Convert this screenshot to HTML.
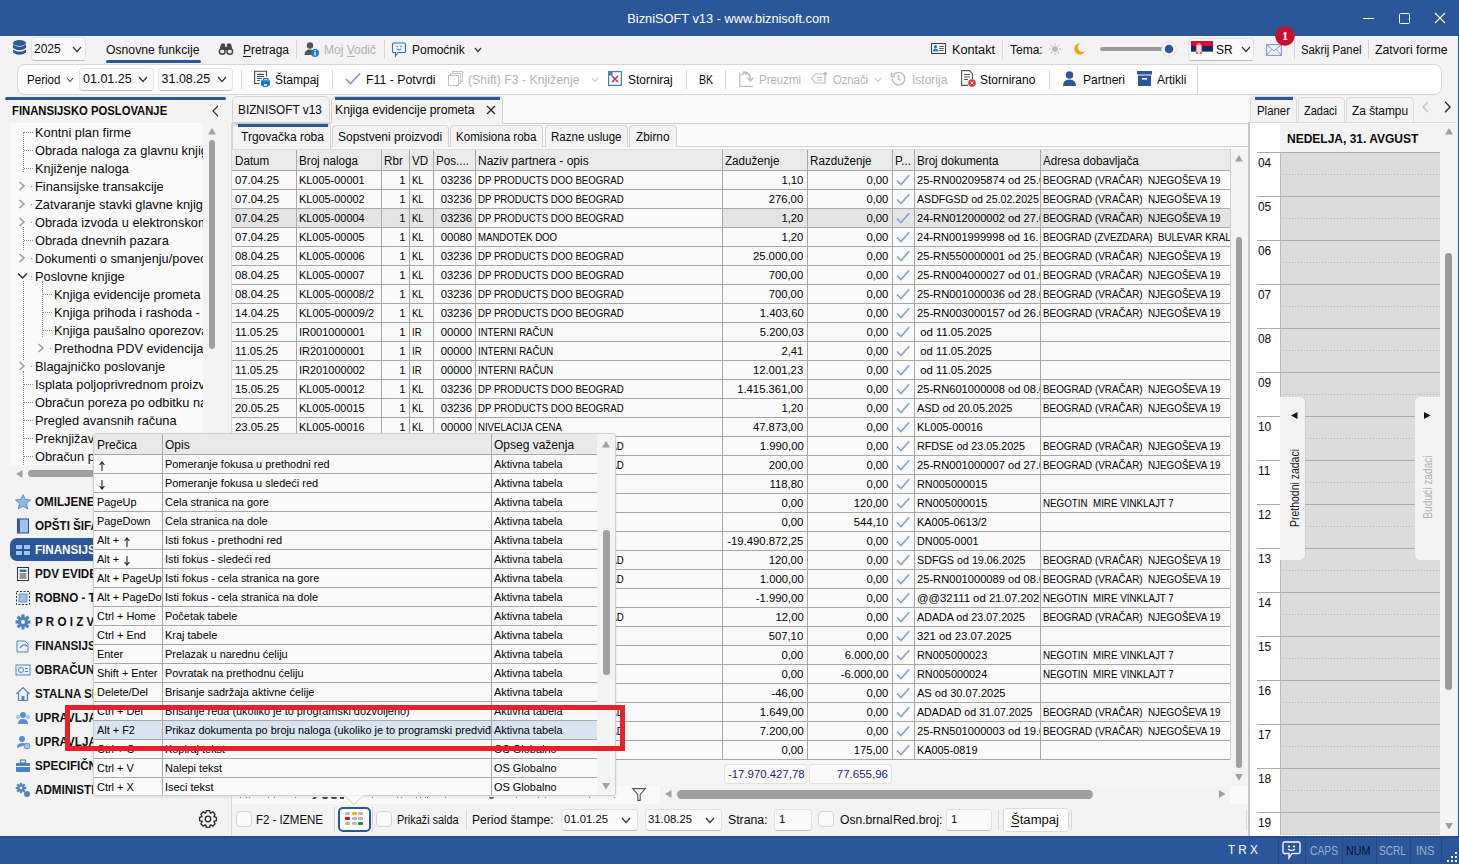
<!DOCTYPE html><html><head><meta charset="utf-8"><style>
html,body{margin:0;padding:0;}
body{width:1459px;height:864px;position:relative;overflow:hidden;background:#F3F3F3;font-family:"Liberation Sans",sans-serif;}
.a{position:absolute;box-sizing:border-box;}
.t{position:absolute;white-space:pre;line-height:1;}
svg.a{overflow:visible}
</style></head><body>
<div class="a" style="left:0px;top:0px;width:1459px;height:36px;background:#2B579A"></div>
<div class="t" style="top:13.16px;font-size:12.8px;color:#FFFFFF;left:627.29px;">BizniSOFT v13 - www.biznisoft.com</div>
<div class="a" style="left:1363px;top:18px;width:11px;height:1px;background:#fff"></div>
<div class="a" style="left:1399px;top:13px;width:10.5px;height:10.5px;border:1px solid #fff;border-radius:1.5px"></div>
<svg class="a" style="left:1434px;top:12px;" width="12" height="12" viewBox="0 0 12 12"><path d="M1 1 L11 11 M11 1 L1 11" stroke="#fff" stroke-width="1.1"/></svg>
<div class="a" style="left:1457.5px;top:36px;width:1.5px;height:800px;background:#2B579A"></div>
<svg class="a" style="left:13px;top:40px;" width="13" height="16" viewBox="0 0 13 16"><ellipse cx="6.5" cy="3" rx="6.5" ry="3" fill="#2B579A"/><path d="M0 4.5 Q6.5 9 13 4.5 V8 Q6.5 12.5 0 8Z" fill="#2B579A"/><path d="M0 9.5 Q6.5 14 13 9.5 V12.5 Q6.5 17 0 12.5Z" fill="#2B579A"/></svg>
<div class="a" style="left:31px;top:37px;width:55px;height:24px;background:#FAFAFA;border:1px solid #E3E3E3;border-bottom:1px solid #BDBDBD;border-radius:4px"></div>
<div class="t" style="top:42.84px;font-size:12px;color:#0A0A0A;left:34px;">2025</div>
<svg class="a" style="left:72px;top:45.75px;" width="10" height="6.5" viewBox="0 0 10 6.5"><path d="M1 1 L5.0 5.5 L9 1" fill="none" stroke="#333" stroke-width="1.2"/></svg>
<div class="t" style="top:43.84px;font-size:12px;color:#0A0A0A;left:106px;transform:scaleX(1.0157);transform-origin:left;">Osnovne funkcije</div>
<div class="a" style="left:106px;top:59.5px;width:95px;height:3px;background:#2B579A;border-radius:2px"></div>
<svg class="a" style="left:219px;top:43px;" width="14" height="12" viewBox="0 0 14 12"><circle cx="3.2" cy="8.5" r="2.8" fill="none" stroke="#444" stroke-width="1.5"/><circle cx="10.8" cy="8.5" r="2.8" fill="none" stroke="#444" stroke-width="1.5"/><path d="M1 7 L2.5 1 H5.5 L6 6 M13 7 L11.5 1 H8.5 L8 6" fill="#444" stroke="#444" stroke-width="1"/><rect x="5.5" y="4" width="3" height="3" fill="#444"/></svg>
<div class="t" style="top:43.84px;font-size:12px;color:#0A0A0A;left:243px;">Pretraga</div>
<div class="a" style="left:243px;top:56px;width:8px;height:1px;background:#1B1B1B"></div>
<div class="a" style="left:296px;top:40px;width:1px;height:19px;background:#D5D5D5"></div>
<svg class="a" style="left:304px;top:42px;" width="15" height="15" viewBox="0 0 15 15"><circle cx="6" cy="3.5" r="3.2" fill="#555"/><path d="M0.5 13 Q0.5 7.5 6 7.5 Q9 7.5 10 9 L8 13Z" fill="#555"/><circle cx="11" cy="11" r="4" fill="#1E7BD8"/><rect x="10.4" y="10" width="1.3" height="3.5" fill="#fff"/><rect x="10.4" y="8" width="1.3" height="1.2" fill="#fff"/></svg>
<div class="t" style="top:43.84px;font-size:12px;color:#B0B0B0;left:324px;">Moj Vodič</div>
<div class="a" style="left:347px;top:56px;width:8px;height:1px;background:#B0B0B0"></div>
<div class="a" style="left:384px;top:40px;width:1px;height:19px;background:#D5D5D5"></div>
<svg class="a" style="left:392px;top:42px;" width="14" height="15" viewBox="0 0 14 15"><path d="M1.5 1 H12.5 Q13.5 1 13.5 2 V9.5 Q13.5 10.5 12.5 10.5 H6 L3.5 14 V10.5 H1.5 Q0.5 10.5 0.5 9.5 V2 Q0.5 1 1.5 1Z" fill="none" stroke="#3471BD" stroke-width="1.1"/><circle cx="5" cy="4.5" r="0.8" fill="#3471BD"/><circle cx="9" cy="4.5" r="0.8" fill="#3471BD"/><path d="M4.5 7 Q7 8.8 9.5 7" fill="none" stroke="#3471BD" stroke-width="1"/></svg>
<div class="t" style="top:43.84px;font-size:12px;color:#0A0A0A;left:412px;">Pomoćnik</div>
<svg class="a" style="left:474px;top:46.75px;" width="8" height="5.5" viewBox="0 0 8 5.5"><path d="M1 1 L4.0 4.5 L7 1" fill="none" stroke="#333" stroke-width="1.2"/></svg>
<svg class="a" style="left:931px;top:43px;" width="15" height="11" viewBox="0 0 15 11"><rect x="0.55" y="0.55" width="13.9" height="9.9" fill="#fff" stroke="#3E444C" stroke-width="1.1"/><circle cx="4.5" cy="3.8" r="1.7" fill="#1E7BD8"/><path d="M1.8 8.6 Q1.8 5.8 4.5 5.8 Q7.2 5.8 7.2 8.6Z" fill="#1E7BD8"/><rect x="8.3" y="3" width="4.5" height="1" fill="#555"/><rect x="8.3" y="5" width="4.5" height="1" fill="#555"/><rect x="8.3" y="7" width="4.5" height="1" fill="#555"/></svg>
<div class="t" style="top:43.84px;font-size:12px;color:#0A0A0A;left:952px;transform:scaleX(1.0567);transform-origin:left;">Kontakt</div>
<div class="a" style="left:1002px;top:40px;width:1px;height:19px;background:#D5D5D5"></div>
<div class="t" style="top:43.84px;font-size:12px;color:#0A0A0A;left:1010px;">Tema:</div>
<svg class="a" style="left:1049px;top:43px;" width="12" height="12" viewBox="0 0 12 12"><circle cx="6" cy="6" r="3" fill="#BDBDBD"/><line x1="10.20" y1="6.00" x2="11.80" y2="6.00" stroke="#BDBDBD" stroke-width="1.2"/><line x1="8.97" y1="8.97" x2="10.10" y2="10.10" stroke="#BDBDBD" stroke-width="1.2"/><line x1="6.00" y1="10.20" x2="6.00" y2="11.80" stroke="#BDBDBD" stroke-width="1.2"/><line x1="3.03" y1="8.97" x2="1.90" y2="10.10" stroke="#BDBDBD" stroke-width="1.2"/><line x1="1.80" y1="6.00" x2="0.20" y2="6.00" stroke="#BDBDBD" stroke-width="1.2"/><line x1="3.03" y1="3.03" x2="1.90" y2="1.90" stroke="#BDBDBD" stroke-width="1.2"/><line x1="6.00" y1="1.80" x2="6.00" y2="0.20" stroke="#BDBDBD" stroke-width="1.2"/><line x1="8.97" y1="3.03" x2="10.10" y2="1.90" stroke="#BDBDBD" stroke-width="1.2"/></svg>
<svg class="a" style="left:1074px;top:43px;" width="11" height="12" viewBox="0 0 11 12"><path d="M6 0.5 A5.5 5.5 0 1 0 10.8 8.2 A4.5 4.5 0 0 1 6 0.5Z" fill="#F5A31A"/></svg>
<div class="a" style="left:1100px;top:47px;width:68px;height:4px;background:#9A9A9A;border-radius:2px"></div>
<svg class="a" style="left:1160px;top:41px;" width="18" height="16" viewBox="0 0 18 16"><circle cx="9" cy="8" r="7.2" fill="#fff" stroke="#E2E2E2" stroke-width="1"/><circle cx="9" cy="8" r="4.3" fill="#2B579A"/></svg>
<div class="a" style="left:1187.5px;top:37.5px;width:66.5px;height:23.5px;background:#FAFAFA;border:1px solid #E3E3E3;border-bottom:1px solid #BDBDBD;border-radius:4px"></div>
<svg class="a" style="left:1191px;top:41px;" width="22" height="16" viewBox="0 0 22 16"><rect x="0" y="0" width="22" height="5" fill="#E0003C"/><rect x="0" y="5" width="22" height="5.8" fill="#0B2A6F"/><rect x="0" y="10.8" width="22" height="5.2" fill="#FFFFFF"/><path d="M5.5 4 Q8 2.5 10.5 4 L10.8 11 Q8 15 5.2 11Z" fill="#F2D8DC" stroke="#E08090" stroke-width="0.6"/><path d="M6.3 2.2 H9.7 L9.3 4.2 H6.7Z" fill="#E0A030"/><circle cx="6" cy="12" r="1" fill="#E04040"/><circle cx="10" cy="12" r="1" fill="#E04040"/></svg>
<div class="t" style="top:43.84px;font-size:12px;color:#0A0A0A;left:1216px;">SR</div>
<svg class="a" style="left:1241px;top:46.25px;" width="10" height="6.5" viewBox="0 0 10 6.5"><path d="M1 1 L5.0 5.5 L9 1" fill="none" stroke="#333" stroke-width="1.2"/></svg>
<svg class="a" style="left:1266px;top:44px;" width="16" height="12" viewBox="0 0 16 12"><rect x="0.6" y="0.6" width="14.8" height="10.8" fill="none" stroke="#7D9BD0" stroke-width="1.1"/><path d="M0.6 0.6 L8 7 L15.4 0.6 M0.6 11.4 L5.8 5.2 M15.4 11.4 L10.2 5.2" fill="none" stroke="#7D9BD0" stroke-width="1"/></svg>
<svg class="a" style="left:1275px;top:26px;" width="20" height="20" viewBox="0 0 20 20"><circle cx="10" cy="10" r="9.8" fill="#C8102E"/><text x="10" y="14.3" text-anchor="middle" font-family="Liberation Serif" font-weight="bold" font-size="12.5" fill="#fff">1</text></svg>
<div class="a" style="left:1294px;top:40px;width:1px;height:19px;background:#D5D5D5"></div>
<div class="t" style="top:43.84px;font-size:12px;color:#0A0A0A;left:1301px;transform:scaleX(0.9449);transform-origin:left;">Sakrij Panel</div>
<div class="a" style="left:1368px;top:40px;width:1px;height:19px;background:#D5D5D5"></div>
<div class="t" style="top:43.84px;font-size:12px;color:#0A0A0A;left:1375px;transform:scaleX(1.0257);transform-origin:left;">Zatvori forme</div>
<div class="a" style="left:16.5px;top:63.5px;width:1425px;height:31px;background:#FFFFFF;border:1px solid #D6D6D6;border-radius:8px"></div>
<div class="t" style="top:73.84px;font-size:12px;color:#0A0A0A;left:27px;transform:scaleX(0.9658);transform-origin:left;">Period</div>
<svg class="a" style="left:66px;top:76.75px;" width="8" height="5.5" viewBox="0 0 8 5.5"><path d="M1 1 L4.0 4.5 L7 1" fill="none" stroke="#444" stroke-width="1.1"/></svg>
<div class="a" style="left:79px;top:67.5px;width:75px;height:23.5px;background:#FAFAFA;border:1px solid #E6E6E6;border-bottom:1px solid #BDBDBD;border-radius:4px"></div>
<div class="t" style="top:73.42px;font-size:12.5px;color:#0A0A0A;left:83px;">01.01.25</div>
<svg class="a" style="left:138px;top:76.25px;" width="10" height="6.5" viewBox="0 0 10 6.5"><path d="M1 1 L5.0 5.5 L9 1" fill="none" stroke="#333" stroke-width="1.2"/></svg>
<div class="a" style="left:157.5px;top:67.5px;width:75px;height:23.5px;background:#FAFAFA;border:1px solid #E6E6E6;border-bottom:1px solid #BDBDBD;border-radius:4px"></div>
<div class="t" style="top:73.42px;font-size:12.5px;color:#0A0A0A;left:161.5px;">31.08.25</div>
<svg class="a" style="left:216.5px;top:76.25px;" width="10" height="6.5" viewBox="0 0 10 6.5"><path d="M1 1 L5.0 5.5 L9 1" fill="none" stroke="#333" stroke-width="1.2"/></svg>
<div class="a" style="left:241px;top:70px;width:1px;height:19px;background:#D5D5D5"></div>
<svg class="a" style="left:254px;top:70px;" width="17" height="18" viewBox="0 0 17 18"><path d="M5.5 13.5 H0.6 V1.2 H12.5 V6.5" fill="none" stroke="#464B52" stroke-width="1.15"/><path d="M3 4.4 H9.8 M3 6.5 H9.8 M3 8.5 H7.8 M3 10.5 H5.8" stroke="#464B52" stroke-width="1.1"/><path d="M9.6 10.5 V8.6 H13.9 V10.5" fill="none" stroke="#1976D6" stroke-width="1.3"/><rect x="7" y="10.2" width="9" height="5.6" rx="0.8" fill="#1976D6"/><rect x="9" y="14" width="5" height="3" fill="#1976D6"/><rect x="10" y="14.3" width="3" height="1.6" fill="#fff"/></svg>
<div class="t" style="top:73.84px;font-size:12px;color:#0A0A0A;left:275px;">Štampaj</div>
<div class="a" style="left:332px;top:70px;width:1px;height:19px;background:#D5D5D5"></div>
<svg class="a" style="left:345px;top:72px;" width="16" height="13" viewBox="0 0 16 13"><path d="M1 7 L5.5 11.5 L15 1.5" fill="none" stroke="#7D9AC6" stroke-width="1.7"/></svg>
<div class="t" style="top:73.84px;font-size:12px;color:#0A0A0A;left:366px;transform:scaleX(1.0264);transform-origin:left;">F11 - Potvrdi</div>
<svg class="a" style="left:448px;top:71px;" width="16" height="16" viewBox="0 0 16 16"><rect x="4.5" y="0.5" width="10" height="10" fill="none" stroke="#C4C4C4"/><rect x="2.5" y="2.5" width="10" height="10" fill="#fff" stroke="#C4C4C4"/><rect x="0.5" y="4.5" width="10" height="10" fill="#fff" stroke="#C4C4C4"/></svg>
<div class="t" style="top:73.84px;font-size:12px;color:#B3B3B3;left:468px;transform:scaleX(1.0257);transform-origin:left;">(Shift) F3 - Knjiženje</div>
<svg class="a" style="left:591px;top:76.75px;" width="8" height="5.5" viewBox="0 0 8 5.5"><path d="M1 1 L4.0 4.5 L7 1" fill="none" stroke="#BBBBBB" stroke-width="1.1"/></svg>
<svg class="a" style="left:608px;top:71px;" width="14" height="15" viewBox="0 0 14 15"><rect x="0.6" y="0.6" width="12.8" height="13.8" fill="#fff" stroke="#3F7FD0" stroke-width="1.2"/><rect x="0.6" y="0.6" width="4" height="4" fill="#3F7FD0"/><path d="M4 5 L10 11 M10 5 L4 11" stroke="#E0202A" stroke-width="1.4"/></svg>
<div class="t" style="top:73.84px;font-size:12px;color:#0A0A0A;left:628px;">Storniraj</div>
<div class="a" style="left:686px;top:70px;width:1px;height:19px;background:#D5D5D5"></div>
<div class="t" style="top:73.84px;font-size:12px;color:#0A0A0A;left:699px;transform:scaleX(0.8746);transform-origin:left;">BK</div>
<div class="a" style="left:725px;top:70px;width:1px;height:19px;background:#D5D5D5"></div>
<svg class="a" style="left:739px;top:70px;" width="16" height="17" viewBox="0 0 16 17"><path d="M0.7 2.5 V16.3 H14" fill="none" stroke="#C2C2C2" stroke-width="1.3"/><path d="M3 5.5 L5 1.8 L8 4.5 M5 2 Q11.5 2.5 11.5 9.5 M8.5 7.5 L11.5 11 L14.3 7.5" fill="none" stroke="#C2C2C2" stroke-width="1.7" stroke-linejoin="round"/></svg>
<div class="t" style="top:73.84px;font-size:12px;color:#B3B3B3;left:759px;transform:scaleX(0.9543);transform-origin:left;">Preuzmi</div>
<svg class="a" style="left:811px;top:72px;" width="17" height="13" viewBox="0 0 17 13"><path d="M4 2 H14 V11 H4 L0.8 6.5Z" fill="none" stroke="#BDBDBD" stroke-width="1.2"/><rect x="6" y="5" width="5" height="1" fill="#BDBDBD"/><rect x="6" y="7.5" width="5" height="1" fill="#BDBDBD"/><circle cx="14.5" cy="1.8" r="1.8" fill="#BDBDBD"/></svg>
<div class="t" style="top:73.84px;font-size:12px;color:#B3B3B3;left:833px;transform:scaleX(0.9371);transform-origin:left;">Označi</div>
<svg class="a" style="left:874px;top:76.75px;" width="8" height="5.5" viewBox="0 0 8 5.5"><path d="M1 1 L4.0 4.5 L7 1" fill="none" stroke="#BBBBBB" stroke-width="1.1"/></svg>
<svg class="a" style="left:891px;top:71px;" width="15" height="15" viewBox="0 0 15 15"><path d="M2.5 4 A6.3 6.3 0 1 1 1.3 8" fill="none" stroke="#BDBDBD" stroke-width="1.5"/><path d="M0.5 2 V5.5 H4" fill="none" stroke="#BDBDBD" stroke-width="1.4"/><path d="M7.5 4 V8 L10 9.5" fill="none" stroke="#BDBDBD" stroke-width="1.4"/></svg>
<div class="t" style="top:73.84px;font-size:12px;color:#B3B3B3;left:912px;">Istorija</div>
<svg class="a" style="left:961px;top:70px;" width="15" height="17" viewBox="0 0 15 17"><path d="M0.6 0.6 H8.5 L11.4 3.5 V9 M0.6 0.6 V15.4 H7" fill="none" stroke="#555" stroke-width="1.1"/><rect x="3" y="4" width="6" height="1" fill="#555"/><rect x="3" y="6.5" width="6" height="1" fill="#555"/><rect x="3" y="9" width="4" height="1" fill="#555"/><circle cx="11" cy="13" r="3.8" fill="#E0303A"/><path d="M9.5 11.5 L12.5 14.5 M12.5 11.5 L9.5 14.5" stroke="#fff" stroke-width="1"/></svg>
<div class="t" style="top:73.84px;font-size:12px;color:#0A0A0A;left:980px;">Stornirano</div>
<div class="a" style="left:1049px;top:70px;width:1px;height:19px;background:#D5D5D5"></div>
<svg class="a" style="left:1063px;top:71px;" width="13" height="15" viewBox="0 0 13 15"><circle cx="6.5" cy="4" r="3.8" fill="#2B579A"/><path d="M0 15 Q0 8.5 6.5 8.5 Q13 8.5 13 15Z" fill="#2B579A"/></svg>
<div class="t" style="top:73.84px;font-size:12px;color:#0A0A0A;left:1083px;">Partneri</div>
<svg class="a" style="left:1137px;top:71px;" width="15" height="15" viewBox="0 0 15 15"><rect x="0" y="0" width="15" height="3.5" fill="#2B579A"/><rect x="1" y="4.5" width="13" height="10.5" fill="#2B579A"/><rect x="5" y="7" width="5" height="1.6" fill="#fff"/></svg>
<div class="t" style="top:73.84px;font-size:12px;color:#0A0A0A;left:1157px;">Artikli</div>
<div class="a" style="left:1197px;top:64px;width:1px;height:30px;background:#D5D5D5"></div>
<div class="a" style="left:5px;top:97px;width:221px;height:3px;background:#2B579A;border-radius:1.5px"></div>
<div class="t" style="top:104.84px;font-size:12px;color:#0A0A0A;font-weight:bold;left:12px;transform:scaleX(0.9396);transform-origin:left;">FINANSIJSKO POSLOVANJE</div>
<svg class="a" style="left:212px;top:105px;" width="7" height="12" viewBox="0 0 7 12"><path d="M6 0.8 L1 6 L6 11.2" fill="none" stroke="#222" stroke-width="1.1"/></svg>
<div class="a" style="left:11px;top:123px;width:192px;height:342px;background:#FAFAFA"></div>
<div class="a" style="left:11px;top:123px;width:192px;height:342px;overflow:hidden">
<div class="a" style="left:12px;top:9px;width:1px;height:40px;border-left:1px dotted #8A8A8A"></div>
<div class="a" style="left:12px;top:104px;width:1px;height:23px;border-left:1px dotted #8A8A8A"></div>
<div class="a" style="left:12px;top:158px;width:1px;height:79px;border-left:1px dotted #8A8A8A"></div>
<div class="a" style="left:12px;top:248px;width:1px;height:94px;border-left:1px dotted #8A8A8A"></div>
<div class="a" style="left:31px;top:158px;width:1px;height:56px;border-left:1px dotted #8A8A8A"></div>
<div class="a" style="left:13px;top:9px;width:9px;height:1px;border-top:1px dotted #8A8A8A"></div>
<div class="t" style="left:24px;top:4.16px;font-size:12.8px;color:#0A0A0A">Kontni plan firme</div>
<div class="a" style="left:13px;top:27px;width:9px;height:1px;border-top:1px dotted #8A8A8A"></div>
<div class="t" style="left:24px;top:22.16px;font-size:12.8px;color:#0A0A0A">Obrada naloga za glavnu knjigu</div>
<div class="a" style="left:13px;top:45px;width:9px;height:1px;border-top:1px dotted #8A8A8A"></div>
<div class="t" style="left:24px;top:40.16px;font-size:12.8px;color:#0A0A0A">Knjiženje naloga</div>
<svg class="a" style="left:7px;top:58px" width="8" height="10"><path d="M1.5 1 L6 5 L1.5 9" fill="none" stroke="#9A9A9A" stroke-width="1.5"/></svg>
<div class="a" style="left:20px;top:63px;width:1px;height:1px;background:#8A8A8A"></div>
<div class="t" style="left:24px;top:58.16px;font-size:12.8px;color:#0A0A0A">Finansijske transakcije</div>
<svg class="a" style="left:7px;top:76px" width="8" height="10"><path d="M1.5 1 L6 5 L1.5 9" fill="none" stroke="#9A9A9A" stroke-width="1.5"/></svg>
<div class="a" style="left:20px;top:81px;width:1px;height:1px;background:#8A8A8A"></div>
<div class="t" style="left:24px;top:76.16px;font-size:12.8px;color:#0A0A0A">Zatvaranje stavki glavne knjige</div>
<svg class="a" style="left:7px;top:94px" width="8" height="10"><path d="M1.5 1 L6 5 L1.5 9" fill="none" stroke="#9A9A9A" stroke-width="1.5"/></svg>
<div class="a" style="left:20px;top:99px;width:1px;height:1px;background:#8A8A8A"></div>
<div class="t" style="left:24px;top:94.16px;font-size:12.8px;color:#0A0A0A">Obrada izvoda u elektronskom obliku</div>
<div class="a" style="left:13px;top:117px;width:9px;height:1px;border-top:1px dotted #8A8A8A"></div>
<div class="t" style="left:24px;top:112.16px;font-size:12.8px;color:#0A0A0A">Obrada dnevnih pazara</div>
<svg class="a" style="left:7px;top:130px" width="8" height="10"><path d="M1.5 1 L6 5 L1.5 9" fill="none" stroke="#9A9A9A" stroke-width="1.5"/></svg>
<div class="a" style="left:20px;top:135px;width:1px;height:1px;background:#8A8A8A"></div>
<div class="t" style="left:24px;top:130.16px;font-size:12.8px;color:#0A0A0A">Dokumenti o smanjenju/povećanju</div>
<svg class="a" style="left:6px;top:149px" width="11" height="8"><path d="M1 1.5 L5.5 6 L10 1.5" fill="none" stroke="#333" stroke-width="1.5"/></svg>
<div class="a" style="left:20px;top:153px;width:1px;height:1px;background:#8A8A8A"></div>
<div class="t" style="left:24px;top:148.16px;font-size:12.8px;color:#0A0A0A">Poslovne knjige</div>
<div class="a" style="left:32px;top:171px;width:9px;height:1px;border-top:1px dotted #8A8A8A"></div>
<div class="t" style="left:43px;top:166.16px;font-size:12.8px;color:#0A0A0A">Knjiga evidencije prometa</div>
<div class="a" style="left:32px;top:189px;width:9px;height:1px;border-top:1px dotted #8A8A8A"></div>
<div class="t" style="left:43px;top:184.16px;font-size:12.8px;color:#0A0A0A">Knjiga prihoda i rashoda - paušal</div>
<div class="a" style="left:32px;top:207px;width:9px;height:1px;border-top:1px dotted #8A8A8A"></div>
<div class="t" style="left:43px;top:202.16px;font-size:12.8px;color:#0A0A0A">Knjiga paušalno oporezovanih</div>
<svg class="a" style="left:26px;top:220px" width="8" height="10"><path d="M1.5 1 L6 5 L1.5 9" fill="none" stroke="#9A9A9A" stroke-width="1.5"/></svg>
<div class="a" style="left:39px;top:225px;width:1px;height:1px;background:#8A8A8A"></div>
<div class="t" style="left:43px;top:220.16px;font-size:12.8px;color:#0A0A0A">Prethodna PDV evidencija</div>
<svg class="a" style="left:7px;top:238px" width="8" height="10"><path d="M1.5 1 L6 5 L1.5 9" fill="none" stroke="#9A9A9A" stroke-width="1.5"/></svg>
<div class="a" style="left:20px;top:243px;width:1px;height:1px;background:#8A8A8A"></div>
<div class="t" style="left:24px;top:238.16px;font-size:12.8px;color:#0A0A0A">Blagajničko poslovanje</div>
<div class="a" style="left:13px;top:261px;width:9px;height:1px;border-top:1px dotted #8A8A8A"></div>
<div class="t" style="left:24px;top:256.16px;font-size:12.8px;color:#0A0A0A">Isplata poljoprivrednom proizvođaču</div>
<div class="a" style="left:13px;top:279px;width:9px;height:1px;border-top:1px dotted #8A8A8A"></div>
<div class="t" style="left:24px;top:274.16px;font-size:12.8px;color:#0A0A0A">Obračun poreza po odbitku na prihode</div>
<div class="a" style="left:13px;top:297px;width:9px;height:1px;border-top:1px dotted #8A8A8A"></div>
<div class="t" style="left:24px;top:292.16px;font-size:12.8px;color:#0A0A0A">Pregled avansnih računa</div>
<div class="a" style="left:13px;top:315px;width:9px;height:1px;border-top:1px dotted #8A8A8A"></div>
<div class="t" style="left:24px;top:310.16px;font-size:12.8px;color:#0A0A0A">Preknjižavanje avansa</div>
<div class="a" style="left:13px;top:333px;width:9px;height:1px;border-top:1px dotted #8A8A8A"></div>
<div class="t" style="left:24px;top:328.16px;font-size:12.8px;color:#0A0A0A">Obračun poreza</div>
</div>
<svg class="a" style="left:208px;top:128px;" width="8" height="7" viewBox="0 0 8 7"><path d="M0 6.5 L4 0 L8 6.5Z" fill="#A0A0A0"/></svg>
<div class="a" style="left:208.5px;top:140px;width:6px;height:209px;background:#A0A0A0;border-radius:3px"></div>
<svg class="a" style="left:16px;top:470px;" width="7" height="8" viewBox="0 0 7 8"><path d="M6.5 0 L0 4 L6.5 8Z" fill="#A0A0A0"/></svg>
<div class="a" style="left:28px;top:470px;width:175px;height:7px;background:#A0A0A0;border-radius:3.5px"></div>
<div class="a" style="left:10px;top:538px;width:215px;height:23px;background:#2B579A;border-radius:7px"></div>
<div class="t" style="top:496.42px;font-size:12.5px;color:#111111;font-weight:bold;left:35px;transform:scaleX(0.9300);transform-origin:left;">OMILJENE FORME</div>
<div class="t" style="top:520.42px;font-size:12.5px;color:#111111;font-weight:bold;left:35px;transform:scaleX(0.9300);transform-origin:left;">OPŠTI ŠIFARNICI</div>
<div class="t" style="top:544.42px;font-size:12.5px;color:#FFFFFF;font-weight:bold;left:35px;transform:scaleX(0.9300);transform-origin:left;">FINANSIJSKO POSLOVANJE</div>
<div class="t" style="top:568.42px;font-size:12.5px;color:#111111;font-weight:bold;left:35px;transform:scaleX(0.9300);transform-origin:left;">PDV EVIDENCIJA</div>
<div class="t" style="top:592.42px;font-size:12.5px;color:#111111;font-weight:bold;left:35px;transform:scaleX(0.9300);transform-origin:left;">ROBNO - TRGOVINA</div>
<div class="t" style="top:616.42px;font-size:12.5px;color:#111111;font-weight:bold;left:35px;transform:scaleX(0.9300);transform-origin:left;">P R O I Z V O D N J A</div>
<div class="t" style="top:640.42px;font-size:12.5px;color:#111111;font-weight:bold;left:35px;transform:scaleX(0.9300);transform-origin:left;">FINANSIJSKI IZVEŠTAJI</div>
<div class="t" style="top:664.42px;font-size:12.5px;color:#111111;font-weight:bold;left:35px;transform:scaleX(0.9300);transform-origin:left;">OBRAČUN ZARADA</div>
<div class="t" style="top:688.42px;font-size:12.5px;color:#111111;font-weight:bold;left:35px;transform:scaleX(0.9300);transform-origin:left;">STALNA SREDSTVA</div>
<div class="t" style="top:712.42px;font-size:12.5px;color:#111111;font-weight:bold;left:35px;transform:scaleX(0.9300);transform-origin:left;">UPRAVLJANJE DOKUMENTIMA</div>
<div class="t" style="top:736.42px;font-size:12.5px;color:#111111;font-weight:bold;left:35px;transform:scaleX(0.9300);transform-origin:left;">UPRAVLJANJE KORISNICIMA</div>
<div class="t" style="top:760.42px;font-size:12.5px;color:#111111;font-weight:bold;left:35px;transform:scaleX(0.9300);transform-origin:left;">SPECIFIČNI IZVEŠTAJI</div>
<div class="t" style="top:784.42px;font-size:12.5px;color:#111111;font-weight:bold;left:35px;transform:scaleX(0.9300);transform-origin:left;">ADMINISTRACIJA</div>
<svg class="a" style="left:15px;top:494.0px;" width="16" height="16" viewBox="0 0 16 16"><path d="M8 0.5 L10.2 5.5 L15.5 6 L11.5 9.6 L12.7 15 L8 12.2 L3.3 15 L4.5 9.6 L0.5 6 L5.8 5.5Z" fill="#8DB8E8" stroke="#4E7FBF" stroke-width="0.8"/></svg>
<svg class="a" style="left:15px;top:518.0px;" width="16" height="16" viewBox="0 0 16 16"><rect x="2.5" y="1" width="11" height="14" fill="#9CC4EE" stroke="#2E4A7A" stroke-width="1"/><rect x="2.5" y="1" width="2.5" height="14" fill="#3B5D94"/></svg>
<svg class="a" style="left:15px;top:542.0px;" width="16" height="16" viewBox="0 0 16 16"><rect x="1" y="3" width="6" height="4" fill="#9FC3EA"/><rect x="9" y="3" width="6" height="4" fill="#9FC3EA"/><rect x="1" y="9" width="6" height="4" fill="#9FC3EA"/><rect x="9" y="9" width="6" height="4" fill="#9FC3EA"/></svg>
<svg class="a" style="left:15px;top:566.0px;" width="16" height="16" viewBox="0 0 16 16"><rect x="2.5" y="1.5" width="11" height="13" fill="#fff" stroke="#333" stroke-width="1"/><rect x="4.5" y="3.5" width="7" height="2.5" fill="#2F6FD0"/><rect x="4.5" y="7.5" width="7" height="1" fill="#333"/><rect x="4.5" y="9.5" width="7" height="1" fill="#333"/><rect x="4.5" y="11.5" width="7" height="1" fill="#333"/></svg>
<svg class="a" style="left:15px;top:590.0px;" width="16" height="16" viewBox="0 0 16 16"><rect x="1.5" y="1.5" width="13" height="13" fill="none" stroke="#333" stroke-width="1" stroke-dasharray="2 1.5"/><rect x="4" y="4" width="8" height="8" fill="#9CC4EE" stroke="#4E7FBF" stroke-width="0.8"/></svg>
<svg class="a" style="left:15px;top:614.0px;" width="16" height="16" viewBox="0 0 16 16"><g transform="translate(8 8)"><rect x="-1.6" y="-7.5" width="3.2" height="4" fill="#4A82C8" transform="rotate(0)"/><rect x="-1.6" y="-7.5" width="3.2" height="4" fill="#4A82C8" transform="rotate(45)"/><rect x="-1.6" y="-7.5" width="3.2" height="4" fill="#4A82C8" transform="rotate(90)"/><rect x="-1.6" y="-7.5" width="3.2" height="4" fill="#4A82C8" transform="rotate(135)"/><rect x="-1.6" y="-7.5" width="3.2" height="4" fill="#4A82C8" transform="rotate(180)"/><rect x="-1.6" y="-7.5" width="3.2" height="4" fill="#4A82C8" transform="rotate(225)"/><rect x="-1.6" y="-7.5" width="3.2" height="4" fill="#4A82C8" transform="rotate(270)"/><rect x="-1.6" y="-7.5" width="3.2" height="4" fill="#4A82C8" transform="rotate(315)"/><circle r="5" fill="#4A82C8"/><circle r="2" fill="#F3F3F3"/></g></svg>
<svg class="a" style="left:15px;top:638.0px;" width="16" height="16" viewBox="0 0 16 16"><path d="M2 3 H10 L13 6 V14 H2Z" fill="#E8F0FA" stroke="#4A82C8" stroke-width="1"/><path d="M5 10 Q8 5 12 8" fill="none" stroke="#4A82C8" stroke-width="1.3"/></svg>
<svg class="a" style="left:15px;top:662.0px;" width="16" height="16" viewBox="0 0 16 16"><rect x="1" y="3" width="14" height="10" fill="#E8F0FA" stroke="#4A82C8" stroke-width="1"/><circle cx="6" cy="8" r="2.5" fill="none" stroke="#4A82C8"/><rect x="10" y="6" width="3" height="1" fill="#4A82C8"/><rect x="10" y="9" width="3" height="1" fill="#4A82C8"/></svg>
<svg class="a" style="left:15px;top:686.0px;" width="16" height="16" viewBox="0 0 16 16"><path d="M1.5 8 L8 1.5 L14.5 8 M3.5 7 V14.5 H12.5 V7" fill="none" stroke="#4A82C8" stroke-width="1.2"/><rect x="6.5" y="10" width="3" height="4.5" fill="#4A82C8"/></svg>
<svg class="a" style="left:15px;top:710.0px;" width="16" height="16" viewBox="0 0 16 16"><circle cx="8" cy="5" r="3" fill="#5B8ED0"/><path d="M3 14 Q3 9 8 9 Q13 9 13 14Z" fill="#5B8ED0"/><circle cx="3" cy="7" r="2" fill="#9CC4EE"/><circle cx="13" cy="7" r="2" fill="#9CC4EE"/></svg>
<svg class="a" style="left:15px;top:734.0px;" width="16" height="16" viewBox="0 0 16 16"><circle cx="7" cy="5" r="3" fill="#5B8ED0"/><path d="M2 14 Q2 9 7 9 Q10 9 11 10.5" fill="#5B8ED0"/><circle cx="12" cy="12" r="3" fill="#9CC4EE" stroke="#4A82C8" stroke-width="0.8"/></svg>
<svg class="a" style="left:15px;top:758.0px;" width="16" height="16" viewBox="0 0 16 16"><rect x="1" y="5" width="14" height="9" rx="1" fill="#4A82C8"/><rect x="5.5" y="2" width="5" height="3" fill="none" stroke="#4A82C8" stroke-width="1.2"/><rect x="1" y="8" width="14" height="1" fill="#fff"/></svg>
<svg class="a" style="left:15px;top:782.0px;" width="16" height="16" viewBox="0 0 16 16"><g transform="translate(6 6) scale(0.7)"><rect x="-1.6" y="-7.5" width="3.2" height="4" fill="#4A82C8" transform="rotate(0)"/><rect x="-1.6" y="-7.5" width="3.2" height="4" fill="#4A82C8" transform="rotate(45)"/><rect x="-1.6" y="-7.5" width="3.2" height="4" fill="#4A82C8" transform="rotate(90)"/><rect x="-1.6" y="-7.5" width="3.2" height="4" fill="#4A82C8" transform="rotate(135)"/><rect x="-1.6" y="-7.5" width="3.2" height="4" fill="#4A82C8" transform="rotate(180)"/><rect x="-1.6" y="-7.5" width="3.2" height="4" fill="#4A82C8" transform="rotate(225)"/><rect x="-1.6" y="-7.5" width="3.2" height="4" fill="#4A82C8" transform="rotate(270)"/><rect x="-1.6" y="-7.5" width="3.2" height="4" fill="#4A82C8" transform="rotate(315)"/><circle r="5" fill="#4A82C8"/><circle r="2" fill="#F3F3F3"/></g><circle cx="12" cy="12" r="3" fill="#4A82C8"/></svg>
<svg class="a" style="left:199px;top:810px;" width="18" height="18" viewBox="0 0 18 18"><path d="M14.99 6.75 L17.43 7.29 L17.43 10.71 L14.99 11.25 L14.83 11.64 L16.17 13.75 L13.75 16.17 L11.64 14.83 L11.25 14.99 L10.71 17.43 L7.29 17.43 L6.75 14.99 L6.36 14.83 L4.25 16.17 L1.83 13.75 L3.17 11.64 L3.01 11.25 L0.57 10.71 L0.57 7.29 L3.01 6.75 L3.17 6.36 L1.83 4.25 L4.25 1.83 L6.36 3.17 L6.75 3.01 L7.29 0.57 L10.71 0.57 L11.25 3.01 L11.64 3.17 L13.75 1.83 L16.17 4.25 L14.83 6.36Z" fill="none" stroke="#2A2A2A" stroke-width="1.3" stroke-linejoin="round"/><circle cx="9" cy="9" r="2.8" fill="none" stroke="#2A2A2A" stroke-width="1.3"/></svg>
<div class="a" style="left:231px;top:123px;width:1px;height:713px;background:#D8D8D8"></div>
<div class="a" style="left:232px;top:95px;width:1016px;height:28px;background:#FAFAFA"></div>
<div class="a" style="left:232px;top:96px;width:97.5px;height:27px;background:#F3F3F3;border:1px solid #D2D2D2;border-radius:5px 5px 0 0"></div>
<div class="t" style="top:103.84px;font-size:12px;color:#0A0A0A;left:238px;transform:scaleX(0.9842);transform-origin:left;">BIZNISOFT v13</div>
<div class="a" style="left:330.5px;top:96px;width:172px;height:28px;background:#F3F3F3;border:1px solid #D2D2D2;border-bottom:none;border-radius:5px 5px 0 0"></div>
<div class="a" style="left:334.5px;top:97px;width:165px;height:3px;background:#2B579A"></div>
<div class="t" style="top:103.84px;font-size:12px;color:#0A0A0A;left:335px;transform:scaleX(1.0152);transform-origin:left;">Knjiga evidencije prometa</div>
<svg class="a" style="left:486px;top:105px;" width="10" height="10" viewBox="0 0 10 10"><path d="M1 1 L9 9 M9 1 L1 9" stroke="#222" stroke-width="1.2"/></svg>
<div class="a" style="left:232px;top:122.5px;width:1018px;height:714px;background:#FAFAFA;border-top:1px solid #CACACA;border-left:1.5px solid #D4D4D4"></div>
<div class="a" style="left:331px;top:122.5px;width:172px;height:1.2px;background:#F3F3F3"></div>
<div class="a" style="left:232px;top:146px;width:1016px;height:1px;background:#D0D0D0"></div>
<div class="a" style="left:232px;top:124px;width:99px;height:25.5px;background:#F3F3F3;border:1px solid #D2D2D2;border-bottom:none;border-radius:4px 4px 0 0"></div>
<div class="t" style="top:130.84px;font-size:12px;color:#0A0A0A;left:241px;">Trgovačka roba</div>
<div class="a" style="left:331.5px;top:124.5px;width:117.0px;height:22.5px;background:#F3F3F3;border:1px solid #D2D2D2;border-bottom:none;border-radius:4px 4px 0 0"></div>
<div class="t" style="top:130.84px;font-size:12px;color:#0A0A0A;left:338px;">Sopstveni proizvodi</div>
<div class="a" style="left:449.5px;top:124.5px;width:93.5px;height:22.5px;background:#F3F3F3;border:1px solid #D2D2D2;border-bottom:none;border-radius:4px 4px 0 0"></div>
<div class="t" style="top:130.84px;font-size:12px;color:#0A0A0A;left:456px;transform:scaleX(0.9655);transform-origin:left;">Komisiona roba</div>
<div class="a" style="left:544.5px;top:124.5px;width:83.0px;height:22.5px;background:#F3F3F3;border:1px solid #D2D2D2;border-bottom:none;border-radius:4px 4px 0 0"></div>
<div class="t" style="top:130.84px;font-size:12px;color:#0A0A0A;left:551px;transform:scaleX(0.9607);transform-origin:left;">Razne usluge</div>
<div class="a" style="left:629px;top:124.5px;width:47.5px;height:22.5px;background:#F3F3F3;border:1px solid #D2D2D2;border-bottom:none;border-radius:4px 4px 0 0"></div>
<div class="t" style="top:130.84px;font-size:12px;color:#0A0A0A;left:636px;transform:scaleX(0.9849);transform-origin:left;">Zbirno</div>
<div class="a" style="left:237.5px;top:124px;width:90px;height:3px;background:#2B579A"></div>
<div class="a" style="left:232px;top:149px;width:998px;height:1px;background:#DCDCDC"></div>
<div class="a" style="left:232px;top:150px;width:998px;height:20px;background:#EAEAEA"></div>
<div class="t" style="top:154.84px;font-size:12px;color:#0A0A0A;left:235px;transform:scaleX(0.9700);transform-origin:left;">Datum</div>
<div class="t" style="top:154.84px;font-size:12px;color:#0A0A0A;left:299px;transform:scaleX(0.9700);transform-origin:left;">Broj naloga</div>
<div class="t" style="top:154.84px;font-size:12px;color:#0A0A0A;left:384px;transform:scaleX(0.9700);transform-origin:left;">Rbr</div>
<div class="t" style="top:154.84px;font-size:12px;color:#0A0A0A;left:412px;transform:scaleX(0.9700);transform-origin:left;">VD</div>
<div class="t" style="top:154.84px;font-size:12px;color:#0A0A0A;left:436px;transform:scaleX(0.9700);transform-origin:left;">Pos....</div>
<div class="t" style="top:154.84px;font-size:12px;color:#0A0A0A;left:478px;">Naziv partnera - opis</div>
<div class="t" style="top:154.84px;font-size:12px;color:#0A0A0A;left:725px;transform:scaleX(0.9700);transform-origin:left;">Zaduženje</div>
<div class="t" style="top:154.84px;font-size:12px;color:#0A0A0A;left:810px;transform:scaleX(0.9700);transform-origin:left;">Razduženje</div>
<div class="t" style="top:154.84px;font-size:12px;color:#0A0A0A;left:895px;transform:scaleX(0.9700);transform-origin:left;">P...</div>
<div class="t" style="top:154.84px;font-size:12px;color:#0A0A0A;left:917px;transform:scaleX(0.9700);transform-origin:left;">Broj dokumenta</div>
<div class="t" style="top:154.84px;font-size:12px;color:#0A0A0A;left:1043px;transform:scaleX(0.9700);transform-origin:left;">Adresa dobavljača</div>
<div class="a" style="left:232px;top:170px;width:998px;height:589px;overflow:hidden;background:#FAFAFA">
<div class="a" style="left:0px;top:0px;width:64px;height:19px;overflow:hidden"><div class="t" style="left:3px;top:5.27px;font-size:11.5px;color:#000;transform:scaleX(0.9829);transform-origin:left">07.04.25</div></div>
<div class="a" style="left:64px;top:0px;width:85px;height:19px;overflow:hidden"><div class="t" style="left:3px;top:5.27px;font-size:11.5px;color:#000;transform:scaleX(0.9506);transform-origin:left">KL005-00001</div></div>
<div class="a" style="left:149px;top:0px;width:28px;height:19px;overflow:hidden"><div class="t" style="right:3.5px;top:5.27px;font-size:11.5px;color:#000;transform:scaleX(0.9800);transform-origin:right">1</div></div>
<div class="a" style="left:177px;top:0px;width:24px;height:19px;overflow:hidden"><div class="t" style="left:3px;top:5.27px;font-size:11.5px;color:#000;transform:scaleX(0.8300);transform-origin:left">KL</div></div>
<div class="a" style="left:201px;top:0px;width:42px;height:19px;overflow:hidden"><div class="t" style="right:3.5px;top:5.27px;font-size:11.5px;color:#000;transform:scaleX(0.9800);transform-origin:right">03236</div></div>
<div class="a" style="left:243px;top:0px;width:247px;height:19px;overflow:hidden"><div class="t" style="left:3px;top:5.27px;font-size:11.5px;color:#000;transform:scaleX(0.8394);transform-origin:left">DP PRODUCTS DOO BEOGRAD</div></div>
<div class="a" style="left:490px;top:0px;width:85px;height:19px;overflow:hidden"><div class="t" style="right:3.5px;top:5.27px;font-size:11.5px;color:#000;transform:scaleX(0.9829);transform-origin:right">1,10</div></div>
<div class="a" style="left:575px;top:0px;width:85px;height:19px;overflow:hidden"><div class="t" style="right:3.5px;top:5.27px;font-size:11.5px;color:#000;transform:scaleX(0.9829);transform-origin:right">0,00</div></div>
<svg class="a" style="left:664px;top:4px" width="14" height="12"><path d="M1 6.5 L5 10.5 L13.2 1.2" fill="none" stroke="#88A2C8" stroke-width="1.7"/></svg>
<div class="a" style="left:682px;top:0px;width:126px;height:19px;overflow:hidden"><div class="t" style="left:3px;top:5.27px;font-size:11.5px;color:#000;transform:scaleX(0.9686);transform-origin:left">25-RN002095874 od 25.02.2025</div></div>
<div class="a" style="left:808px;top:0px;width:190px;height:19px;overflow:hidden"><div class="t" style="left:3px;top:5.27px;font-size:11.5px;color:#000;transform:scaleX(0.8558);transform-origin:left">BEOGRAD (VRAČAR)  NJEGOŠEVA 19</div></div>
<div class="a" style="left:0px;top:19px;width:64px;height:19px;overflow:hidden"><div class="t" style="left:3px;top:5.27px;font-size:11.5px;color:#000;transform:scaleX(0.9829);transform-origin:left">07.04.25</div></div>
<div class="a" style="left:64px;top:19px;width:85px;height:19px;overflow:hidden"><div class="t" style="left:3px;top:5.27px;font-size:11.5px;color:#000;transform:scaleX(0.9506);transform-origin:left">KL005-00002</div></div>
<div class="a" style="left:149px;top:19px;width:28px;height:19px;overflow:hidden"><div class="t" style="right:3.5px;top:5.27px;font-size:11.5px;color:#000;transform:scaleX(0.9800);transform-origin:right">1</div></div>
<div class="a" style="left:177px;top:19px;width:24px;height:19px;overflow:hidden"><div class="t" style="left:3px;top:5.27px;font-size:11.5px;color:#000;transform:scaleX(0.8300);transform-origin:left">KL</div></div>
<div class="a" style="left:201px;top:19px;width:42px;height:19px;overflow:hidden"><div class="t" style="right:3.5px;top:5.27px;font-size:11.5px;color:#000;transform:scaleX(0.9800);transform-origin:right">03236</div></div>
<div class="a" style="left:243px;top:19px;width:247px;height:19px;overflow:hidden"><div class="t" style="left:3px;top:5.27px;font-size:11.5px;color:#000;transform:scaleX(0.8394);transform-origin:left">DP PRODUCTS DOO BEOGRAD</div></div>
<div class="a" style="left:490px;top:19px;width:85px;height:19px;overflow:hidden"><div class="t" style="right:3.5px;top:5.27px;font-size:11.5px;color:#000;transform:scaleX(0.9818);transform-origin:right">276,00</div></div>
<div class="a" style="left:575px;top:19px;width:85px;height:19px;overflow:hidden"><div class="t" style="right:3.5px;top:5.27px;font-size:11.5px;color:#000;transform:scaleX(0.9829);transform-origin:right">0,00</div></div>
<svg class="a" style="left:664px;top:23px" width="14" height="12"><path d="M1 6.5 L5 10.5 L13.2 1.2" fill="none" stroke="#88A2C8" stroke-width="1.7"/></svg>
<div class="a" style="left:682px;top:19px;width:126px;height:19px;overflow:hidden"><div class="t" style="left:3px;top:5.27px;font-size:11.5px;color:#000;transform:scaleX(0.9209);transform-origin:left">ASDFGSD od 25.02.2025</div></div>
<div class="a" style="left:808px;top:19px;width:190px;height:19px;overflow:hidden"><div class="t" style="left:3px;top:5.27px;font-size:11.5px;color:#000;transform:scaleX(0.8558);transform-origin:left">BEOGRAD (VRAČAR)  NJEGOŠEVA 19</div></div>
<div class="a" style="left:0;top:39px;width:243px;height:19px;background:#E4E4E4"></div>
<div class="a" style="left:491px;top:39px;width:507px;height:19px;background:#E4E4E4"></div>
<div class="a" style="left:0px;top:38px;width:64px;height:19px;overflow:hidden"><div class="t" style="left:3px;top:5.27px;font-size:11.5px;color:#000;transform:scaleX(0.9829);transform-origin:left">07.04.25</div></div>
<div class="a" style="left:64px;top:38px;width:85px;height:19px;overflow:hidden"><div class="t" style="left:3px;top:5.27px;font-size:11.5px;color:#000;transform:scaleX(0.9506);transform-origin:left">KL005-00004</div></div>
<div class="a" style="left:149px;top:38px;width:28px;height:19px;overflow:hidden"><div class="t" style="right:3.5px;top:5.27px;font-size:11.5px;color:#000;transform:scaleX(0.9800);transform-origin:right">1</div></div>
<div class="a" style="left:177px;top:38px;width:24px;height:19px;overflow:hidden"><div class="t" style="left:3px;top:5.27px;font-size:11.5px;color:#000;transform:scaleX(0.8300);transform-origin:left">KL</div></div>
<div class="a" style="left:201px;top:38px;width:42px;height:19px;overflow:hidden"><div class="t" style="right:3.5px;top:5.27px;font-size:11.5px;color:#000;transform:scaleX(0.9800);transform-origin:right">03236</div></div>
<div class="a" style="left:243px;top:38px;width:247px;height:19px;overflow:hidden"><div class="t" style="left:3px;top:5.27px;font-size:11.5px;color:#000;transform:scaleX(0.8394);transform-origin:left">DP PRODUCTS DOO BEOGRAD</div></div>
<div class="a" style="left:490px;top:38px;width:85px;height:19px;overflow:hidden"><div class="t" style="right:3.5px;top:5.27px;font-size:11.5px;color:#000;transform:scaleX(0.9829);transform-origin:right">1,20</div></div>
<div class="a" style="left:575px;top:38px;width:85px;height:19px;overflow:hidden"><div class="t" style="right:3.5px;top:5.27px;font-size:11.5px;color:#000;transform:scaleX(0.9829);transform-origin:right">0,00</div></div>
<svg class="a" style="left:664px;top:42px" width="14" height="12"><path d="M1 6.5 L5 10.5 L13.2 1.2" fill="none" stroke="#88A2C8" stroke-width="1.7"/></svg>
<div class="a" style="left:682px;top:38px;width:126px;height:19px;overflow:hidden"><div class="t" style="left:3px;top:5.27px;font-size:11.5px;color:#000;transform:scaleX(0.9686);transform-origin:left">24-RN012000002 od 27.02.2025</div></div>
<div class="a" style="left:808px;top:38px;width:190px;height:19px;overflow:hidden"><div class="t" style="left:3px;top:5.27px;font-size:11.5px;color:#000;transform:scaleX(0.8558);transform-origin:left">BEOGRAD (VRAČAR)  NJEGOŠEVA 19</div></div>
<div class="a" style="left:0px;top:57px;width:64px;height:19px;overflow:hidden"><div class="t" style="left:3px;top:5.27px;font-size:11.5px;color:#000;transform:scaleX(0.9829);transform-origin:left">07.04.25</div></div>
<div class="a" style="left:64px;top:57px;width:85px;height:19px;overflow:hidden"><div class="t" style="left:3px;top:5.27px;font-size:11.5px;color:#000;transform:scaleX(0.9506);transform-origin:left">KL005-00005</div></div>
<div class="a" style="left:149px;top:57px;width:28px;height:19px;overflow:hidden"><div class="t" style="right:3.5px;top:5.27px;font-size:11.5px;color:#000;transform:scaleX(0.9800);transform-origin:right">1</div></div>
<div class="a" style="left:177px;top:57px;width:24px;height:19px;overflow:hidden"><div class="t" style="left:3px;top:5.27px;font-size:11.5px;color:#000;transform:scaleX(0.8300);transform-origin:left">KL</div></div>
<div class="a" style="left:201px;top:57px;width:42px;height:19px;overflow:hidden"><div class="t" style="right:3.5px;top:5.27px;font-size:11.5px;color:#000;transform:scaleX(0.9800);transform-origin:right">00080</div></div>
<div class="a" style="left:243px;top:57px;width:247px;height:19px;overflow:hidden"><div class="t" style="left:3px;top:5.27px;font-size:11.5px;color:#000;transform:scaleX(0.8357);transform-origin:left">MANDOTEK DOO</div></div>
<div class="a" style="left:490px;top:57px;width:85px;height:19px;overflow:hidden"><div class="t" style="right:3.5px;top:5.27px;font-size:11.5px;color:#000;transform:scaleX(0.9829);transform-origin:right">1,20</div></div>
<div class="a" style="left:575px;top:57px;width:85px;height:19px;overflow:hidden"><div class="t" style="right:3.5px;top:5.27px;font-size:11.5px;color:#000;transform:scaleX(0.9829);transform-origin:right">0,00</div></div>
<svg class="a" style="left:664px;top:61px" width="14" height="12"><path d="M1 6.5 L5 10.5 L13.2 1.2" fill="none" stroke="#88A2C8" stroke-width="1.7"/></svg>
<div class="a" style="left:682px;top:57px;width:126px;height:19px;overflow:hidden"><div class="t" style="left:3px;top:5.27px;font-size:11.5px;color:#000;transform:scaleX(0.9644);transform-origin:left">24-RN001999998 od 16.</div></div>
<div class="a" style="left:808px;top:57px;width:190px;height:19px;overflow:hidden"><div class="t" style="left:3px;top:5.27px;font-size:11.5px;color:#000;transform:scaleX(0.8447);transform-origin:left">BEOGRAD (ZVEZDARA)  BULEVAR KRALJA</div></div>
<div class="a" style="left:0px;top:76px;width:64px;height:19px;overflow:hidden"><div class="t" style="left:3px;top:5.27px;font-size:11.5px;color:#000;transform:scaleX(0.9829);transform-origin:left">08.04.25</div></div>
<div class="a" style="left:64px;top:76px;width:85px;height:19px;overflow:hidden"><div class="t" style="left:3px;top:5.27px;font-size:11.5px;color:#000;transform:scaleX(0.9506);transform-origin:left">KL005-00006</div></div>
<div class="a" style="left:149px;top:76px;width:28px;height:19px;overflow:hidden"><div class="t" style="right:3.5px;top:5.27px;font-size:11.5px;color:#000;transform:scaleX(0.9800);transform-origin:right">1</div></div>
<div class="a" style="left:177px;top:76px;width:24px;height:19px;overflow:hidden"><div class="t" style="left:3px;top:5.27px;font-size:11.5px;color:#000;transform:scaleX(0.8300);transform-origin:left">KL</div></div>
<div class="a" style="left:201px;top:76px;width:42px;height:19px;overflow:hidden"><div class="t" style="right:3.5px;top:5.27px;font-size:11.5px;color:#000;transform:scaleX(0.9800);transform-origin:right">03236</div></div>
<div class="a" style="left:243px;top:76px;width:247px;height:19px;overflow:hidden"><div class="t" style="left:3px;top:5.27px;font-size:11.5px;color:#000;transform:scaleX(0.8394);transform-origin:left">DP PRODUCTS DOO BEOGRAD</div></div>
<div class="a" style="left:490px;top:76px;width:85px;height:19px;overflow:hidden"><div class="t" style="right:3.5px;top:5.27px;font-size:11.5px;color:#000;transform:scaleX(0.9825);transform-origin:right">25.000,00</div></div>
<div class="a" style="left:575px;top:76px;width:85px;height:19px;overflow:hidden"><div class="t" style="right:3.5px;top:5.27px;font-size:11.5px;color:#000;transform:scaleX(0.9829);transform-origin:right">0,00</div></div>
<svg class="a" style="left:664px;top:80px" width="14" height="12"><path d="M1 6.5 L5 10.5 L13.2 1.2" fill="none" stroke="#88A2C8" stroke-width="1.7"/></svg>
<div class="a" style="left:682px;top:76px;width:126px;height:19px;overflow:hidden"><div class="t" style="left:3px;top:5.27px;font-size:11.5px;color:#000;transform:scaleX(0.9686);transform-origin:left">25-RN550000001 od 25.03.2025</div></div>
<div class="a" style="left:808px;top:76px;width:190px;height:19px;overflow:hidden"><div class="t" style="left:3px;top:5.27px;font-size:11.5px;color:#000;transform:scaleX(0.8558);transform-origin:left">BEOGRAD (VRAČAR)  NJEGOŠEVA 19</div></div>
<div class="a" style="left:0px;top:95px;width:64px;height:19px;overflow:hidden"><div class="t" style="left:3px;top:5.27px;font-size:11.5px;color:#000;transform:scaleX(0.9829);transform-origin:left">08.04.25</div></div>
<div class="a" style="left:64px;top:95px;width:85px;height:19px;overflow:hidden"><div class="t" style="left:3px;top:5.27px;font-size:11.5px;color:#000;transform:scaleX(0.9506);transform-origin:left">KL005-00007</div></div>
<div class="a" style="left:149px;top:95px;width:28px;height:19px;overflow:hidden"><div class="t" style="right:3.5px;top:5.27px;font-size:11.5px;color:#000;transform:scaleX(0.9800);transform-origin:right">1</div></div>
<div class="a" style="left:177px;top:95px;width:24px;height:19px;overflow:hidden"><div class="t" style="left:3px;top:5.27px;font-size:11.5px;color:#000;transform:scaleX(0.8300);transform-origin:left">KL</div></div>
<div class="a" style="left:201px;top:95px;width:42px;height:19px;overflow:hidden"><div class="t" style="right:3.5px;top:5.27px;font-size:11.5px;color:#000;transform:scaleX(0.9800);transform-origin:right">03236</div></div>
<div class="a" style="left:243px;top:95px;width:247px;height:19px;overflow:hidden"><div class="t" style="left:3px;top:5.27px;font-size:11.5px;color:#000;transform:scaleX(0.8394);transform-origin:left">DP PRODUCTS DOO BEOGRAD</div></div>
<div class="a" style="left:490px;top:95px;width:85px;height:19px;overflow:hidden"><div class="t" style="right:3.5px;top:5.27px;font-size:11.5px;color:#000;transform:scaleX(0.9818);transform-origin:right">700,00</div></div>
<div class="a" style="left:575px;top:95px;width:85px;height:19px;overflow:hidden"><div class="t" style="right:3.5px;top:5.27px;font-size:11.5px;color:#000;transform:scaleX(0.9829);transform-origin:right">0,00</div></div>
<svg class="a" style="left:664px;top:99px" width="14" height="12"><path d="M1 6.5 L5 10.5 L13.2 1.2" fill="none" stroke="#88A2C8" stroke-width="1.7"/></svg>
<div class="a" style="left:682px;top:95px;width:126px;height:19px;overflow:hidden"><div class="t" style="left:3px;top:5.27px;font-size:11.5px;color:#000;transform:scaleX(0.9686);transform-origin:left">25-RN004000027 od 01.04.2025</div></div>
<div class="a" style="left:808px;top:95px;width:190px;height:19px;overflow:hidden"><div class="t" style="left:3px;top:5.27px;font-size:11.5px;color:#000;transform:scaleX(0.8558);transform-origin:left">BEOGRAD (VRAČAR)  NJEGOŠEVA 19</div></div>
<div class="a" style="left:0px;top:114px;width:64px;height:19px;overflow:hidden"><div class="t" style="left:3px;top:5.27px;font-size:11.5px;color:#000;transform:scaleX(0.9829);transform-origin:left">08.04.25</div></div>
<div class="a" style="left:64px;top:114px;width:85px;height:19px;overflow:hidden"><div class="t" style="left:3px;top:5.27px;font-size:11.5px;color:#000;transform:scaleX(0.9550);transform-origin:left">KL005-00008/2</div></div>
<div class="a" style="left:149px;top:114px;width:28px;height:19px;overflow:hidden"><div class="t" style="right:3.5px;top:5.27px;font-size:11.5px;color:#000;transform:scaleX(0.9800);transform-origin:right">1</div></div>
<div class="a" style="left:177px;top:114px;width:24px;height:19px;overflow:hidden"><div class="t" style="left:3px;top:5.27px;font-size:11.5px;color:#000;transform:scaleX(0.8300);transform-origin:left">KL</div></div>
<div class="a" style="left:201px;top:114px;width:42px;height:19px;overflow:hidden"><div class="t" style="right:3.5px;top:5.27px;font-size:11.5px;color:#000;transform:scaleX(0.9800);transform-origin:right">03236</div></div>
<div class="a" style="left:243px;top:114px;width:247px;height:19px;overflow:hidden"><div class="t" style="left:3px;top:5.27px;font-size:11.5px;color:#000;transform:scaleX(0.8394);transform-origin:left">DP PRODUCTS DOO BEOGRAD</div></div>
<div class="a" style="left:490px;top:114px;width:85px;height:19px;overflow:hidden"><div class="t" style="right:3.5px;top:5.27px;font-size:11.5px;color:#000;transform:scaleX(0.9818);transform-origin:right">700,00</div></div>
<div class="a" style="left:575px;top:114px;width:85px;height:19px;overflow:hidden"><div class="t" style="right:3.5px;top:5.27px;font-size:11.5px;color:#000;transform:scaleX(0.9829);transform-origin:right">0,00</div></div>
<svg class="a" style="left:664px;top:118px" width="14" height="12"><path d="M1 6.5 L5 10.5 L13.2 1.2" fill="none" stroke="#88A2C8" stroke-width="1.7"/></svg>
<div class="a" style="left:682px;top:114px;width:126px;height:19px;overflow:hidden"><div class="t" style="left:3px;top:5.27px;font-size:11.5px;color:#000;transform:scaleX(0.9686);transform-origin:left">25-RN001000036 od 28.03.2025</div></div>
<div class="a" style="left:808px;top:114px;width:190px;height:19px;overflow:hidden"><div class="t" style="left:3px;top:5.27px;font-size:11.5px;color:#000;transform:scaleX(0.8558);transform-origin:left">BEOGRAD (VRAČAR)  NJEGOŠEVA 19</div></div>
<div class="a" style="left:0px;top:133px;width:64px;height:19px;overflow:hidden"><div class="t" style="left:3px;top:5.27px;font-size:11.5px;color:#000;transform:scaleX(0.9829);transform-origin:left">14.04.25</div></div>
<div class="a" style="left:64px;top:133px;width:85px;height:19px;overflow:hidden"><div class="t" style="left:3px;top:5.27px;font-size:11.5px;color:#000;transform:scaleX(0.9550);transform-origin:left">KL005-00009/2</div></div>
<div class="a" style="left:149px;top:133px;width:28px;height:19px;overflow:hidden"><div class="t" style="right:3.5px;top:5.27px;font-size:11.5px;color:#000;transform:scaleX(0.9800);transform-origin:right">1</div></div>
<div class="a" style="left:177px;top:133px;width:24px;height:19px;overflow:hidden"><div class="t" style="left:3px;top:5.27px;font-size:11.5px;color:#000;transform:scaleX(0.8300);transform-origin:left">KL</div></div>
<div class="a" style="left:201px;top:133px;width:42px;height:19px;overflow:hidden"><div class="t" style="right:3.5px;top:5.27px;font-size:11.5px;color:#000;transform:scaleX(0.9800);transform-origin:right">03236</div></div>
<div class="a" style="left:243px;top:133px;width:247px;height:19px;overflow:hidden"><div class="t" style="left:3px;top:5.27px;font-size:11.5px;color:#000;transform:scaleX(0.8394);transform-origin:left">DP PRODUCTS DOO BEOGRAD</div></div>
<div class="a" style="left:490px;top:133px;width:85px;height:19px;overflow:hidden"><div class="t" style="right:3.5px;top:5.27px;font-size:11.5px;color:#000;transform:scaleX(0.9829);transform-origin:right">1.403,60</div></div>
<div class="a" style="left:575px;top:133px;width:85px;height:19px;overflow:hidden"><div class="t" style="right:3.5px;top:5.27px;font-size:11.5px;color:#000;transform:scaleX(0.9829);transform-origin:right">0,00</div></div>
<svg class="a" style="left:664px;top:137px" width="14" height="12"><path d="M1 6.5 L5 10.5 L13.2 1.2" fill="none" stroke="#88A2C8" stroke-width="1.7"/></svg>
<div class="a" style="left:682px;top:133px;width:126px;height:19px;overflow:hidden"><div class="t" style="left:3px;top:5.27px;font-size:11.5px;color:#000;transform:scaleX(0.9686);transform-origin:left">25-RN003000157 od 26.03.2025</div></div>
<div class="a" style="left:808px;top:133px;width:190px;height:19px;overflow:hidden"><div class="t" style="left:3px;top:5.27px;font-size:11.5px;color:#000;transform:scaleX(0.8558);transform-origin:left">BEOGRAD (VRAČAR)  NJEGOŠEVA 19</div></div>
<div class="a" style="left:0px;top:152px;width:64px;height:19px;overflow:hidden"><div class="t" style="left:3px;top:5.27px;font-size:11.5px;color:#000;transform:scaleX(0.9829);transform-origin:left">11.05.25</div></div>
<div class="a" style="left:64px;top:152px;width:85px;height:19px;overflow:hidden"><div class="t" style="left:3px;top:5.27px;font-size:11.5px;color:#000;transform:scaleX(0.9550);transform-origin:left">IR001000001</div></div>
<div class="a" style="left:149px;top:152px;width:28px;height:19px;overflow:hidden"><div class="t" style="right:3.5px;top:5.27px;font-size:11.5px;color:#000;transform:scaleX(0.9800);transform-origin:right">1</div></div>
<div class="a" style="left:177px;top:152px;width:24px;height:19px;overflow:hidden"><div class="t" style="left:3px;top:5.27px;font-size:11.5px;color:#000;transform:scaleX(0.8300);transform-origin:left">IR</div></div>
<div class="a" style="left:201px;top:152px;width:42px;height:19px;overflow:hidden"><div class="t" style="right:3.5px;top:5.27px;font-size:11.5px;color:#000;transform:scaleX(0.9800);transform-origin:right">00000</div></div>
<div class="a" style="left:243px;top:152px;width:247px;height:19px;overflow:hidden"><div class="t" style="left:3px;top:5.27px;font-size:11.5px;color:#000;transform:scaleX(0.8360);transform-origin:left">INTERNI RAČUN</div></div>
<div class="a" style="left:490px;top:152px;width:85px;height:19px;overflow:hidden"><div class="t" style="right:3.5px;top:5.27px;font-size:11.5px;color:#000;transform:scaleX(0.9829);transform-origin:right">5.200,03</div></div>
<div class="a" style="left:575px;top:152px;width:85px;height:19px;overflow:hidden"><div class="t" style="right:3.5px;top:5.27px;font-size:11.5px;color:#000;transform:scaleX(0.9829);transform-origin:right">0,00</div></div>
<svg class="a" style="left:664px;top:156px" width="14" height="12"><path d="M1 6.5 L5 10.5 L13.2 1.2" fill="none" stroke="#88A2C8" stroke-width="1.7"/></svg>
<div class="a" style="left:682px;top:152px;width:126px;height:19px;overflow:hidden"><div class="t" style="left:3px;top:5.27px;font-size:11.5px;color:#000;transform:scaleX(0.9867);transform-origin:left"> od 11.05.2025</div></div>
<div class="a" style="left:0px;top:171px;width:64px;height:19px;overflow:hidden"><div class="t" style="left:3px;top:5.27px;font-size:11.5px;color:#000;transform:scaleX(0.9829);transform-origin:left">11.05.25</div></div>
<div class="a" style="left:64px;top:171px;width:85px;height:19px;overflow:hidden"><div class="t" style="left:3px;top:5.27px;font-size:11.5px;color:#000;transform:scaleX(0.9550);transform-origin:left">IR201000001</div></div>
<div class="a" style="left:149px;top:171px;width:28px;height:19px;overflow:hidden"><div class="t" style="right:3.5px;top:5.27px;font-size:11.5px;color:#000;transform:scaleX(0.9800);transform-origin:right">1</div></div>
<div class="a" style="left:177px;top:171px;width:24px;height:19px;overflow:hidden"><div class="t" style="left:3px;top:5.27px;font-size:11.5px;color:#000;transform:scaleX(0.8300);transform-origin:left">IR</div></div>
<div class="a" style="left:201px;top:171px;width:42px;height:19px;overflow:hidden"><div class="t" style="right:3.5px;top:5.27px;font-size:11.5px;color:#000;transform:scaleX(0.9800);transform-origin:right">00000</div></div>
<div class="a" style="left:243px;top:171px;width:247px;height:19px;overflow:hidden"><div class="t" style="left:3px;top:5.27px;font-size:11.5px;color:#000;transform:scaleX(0.8360);transform-origin:left">INTERNI RAČUN</div></div>
<div class="a" style="left:490px;top:171px;width:85px;height:19px;overflow:hidden"><div class="t" style="right:3.5px;top:5.27px;font-size:11.5px;color:#000;transform:scaleX(0.9829);transform-origin:right">2,41</div></div>
<div class="a" style="left:575px;top:171px;width:85px;height:19px;overflow:hidden"><div class="t" style="right:3.5px;top:5.27px;font-size:11.5px;color:#000;transform:scaleX(0.9829);transform-origin:right">0,00</div></div>
<svg class="a" style="left:664px;top:175px" width="14" height="12"><path d="M1 6.5 L5 10.5 L13.2 1.2" fill="none" stroke="#88A2C8" stroke-width="1.7"/></svg>
<div class="a" style="left:682px;top:171px;width:126px;height:19px;overflow:hidden"><div class="t" style="left:3px;top:5.27px;font-size:11.5px;color:#000;transform:scaleX(0.9867);transform-origin:left"> od 11.05.2025</div></div>
<div class="a" style="left:0px;top:190px;width:64px;height:19px;overflow:hidden"><div class="t" style="left:3px;top:5.27px;font-size:11.5px;color:#000;transform:scaleX(0.9829);transform-origin:left">11.05.25</div></div>
<div class="a" style="left:64px;top:190px;width:85px;height:19px;overflow:hidden"><div class="t" style="left:3px;top:5.27px;font-size:11.5px;color:#000;transform:scaleX(0.9550);transform-origin:left">IR201000002</div></div>
<div class="a" style="left:149px;top:190px;width:28px;height:19px;overflow:hidden"><div class="t" style="right:3.5px;top:5.27px;font-size:11.5px;color:#000;transform:scaleX(0.9800);transform-origin:right">1</div></div>
<div class="a" style="left:177px;top:190px;width:24px;height:19px;overflow:hidden"><div class="t" style="left:3px;top:5.27px;font-size:11.5px;color:#000;transform:scaleX(0.8300);transform-origin:left">IR</div></div>
<div class="a" style="left:201px;top:190px;width:42px;height:19px;overflow:hidden"><div class="t" style="right:3.5px;top:5.27px;font-size:11.5px;color:#000;transform:scaleX(0.9800);transform-origin:right">00000</div></div>
<div class="a" style="left:243px;top:190px;width:247px;height:19px;overflow:hidden"><div class="t" style="left:3px;top:5.27px;font-size:11.5px;color:#000;transform:scaleX(0.8360);transform-origin:left">INTERNI RAČUN</div></div>
<div class="a" style="left:490px;top:190px;width:85px;height:19px;overflow:hidden"><div class="t" style="right:3.5px;top:5.27px;font-size:11.5px;color:#000;transform:scaleX(0.9825);transform-origin:right">12.001,23</div></div>
<div class="a" style="left:575px;top:190px;width:85px;height:19px;overflow:hidden"><div class="t" style="right:3.5px;top:5.27px;font-size:11.5px;color:#000;transform:scaleX(0.9829);transform-origin:right">0,00</div></div>
<svg class="a" style="left:664px;top:194px" width="14" height="12"><path d="M1 6.5 L5 10.5 L13.2 1.2" fill="none" stroke="#88A2C8" stroke-width="1.7"/></svg>
<div class="a" style="left:682px;top:190px;width:126px;height:19px;overflow:hidden"><div class="t" style="left:3px;top:5.27px;font-size:11.5px;color:#000;transform:scaleX(0.9867);transform-origin:left"> od 11.05.2025</div></div>
<div class="a" style="left:0px;top:209px;width:64px;height:19px;overflow:hidden"><div class="t" style="left:3px;top:5.27px;font-size:11.5px;color:#000;transform:scaleX(0.9829);transform-origin:left">15.05.25</div></div>
<div class="a" style="left:64px;top:209px;width:85px;height:19px;overflow:hidden"><div class="t" style="left:3px;top:5.27px;font-size:11.5px;color:#000;transform:scaleX(0.9506);transform-origin:left">KL005-00012</div></div>
<div class="a" style="left:149px;top:209px;width:28px;height:19px;overflow:hidden"><div class="t" style="right:3.5px;top:5.27px;font-size:11.5px;color:#000;transform:scaleX(0.9800);transform-origin:right">1</div></div>
<div class="a" style="left:177px;top:209px;width:24px;height:19px;overflow:hidden"><div class="t" style="left:3px;top:5.27px;font-size:11.5px;color:#000;transform:scaleX(0.8300);transform-origin:left">KL</div></div>
<div class="a" style="left:201px;top:209px;width:42px;height:19px;overflow:hidden"><div class="t" style="right:3.5px;top:5.27px;font-size:11.5px;color:#000;transform:scaleX(0.9800);transform-origin:right">03236</div></div>
<div class="a" style="left:243px;top:209px;width:247px;height:19px;overflow:hidden"><div class="t" style="left:3px;top:5.27px;font-size:11.5px;color:#000;transform:scaleX(0.8394);transform-origin:left">DP PRODUCTS DOO BEOGRAD</div></div>
<div class="a" style="left:490px;top:209px;width:85px;height:19px;overflow:hidden"><div class="t" style="right:3.5px;top:5.27px;font-size:11.5px;color:#000;transform:scaleX(0.9829);transform-origin:right">1.415.361,00</div></div>
<div class="a" style="left:575px;top:209px;width:85px;height:19px;overflow:hidden"><div class="t" style="right:3.5px;top:5.27px;font-size:11.5px;color:#000;transform:scaleX(0.9829);transform-origin:right">0,00</div></div>
<svg class="a" style="left:664px;top:213px" width="14" height="12"><path d="M1 6.5 L5 10.5 L13.2 1.2" fill="none" stroke="#88A2C8" stroke-width="1.7"/></svg>
<div class="a" style="left:682px;top:209px;width:126px;height:19px;overflow:hidden"><div class="t" style="left:3px;top:5.27px;font-size:11.5px;color:#000;transform:scaleX(0.9686);transform-origin:left">25-RN601000008 od 08.05.2025</div></div>
<div class="a" style="left:808px;top:209px;width:190px;height:19px;overflow:hidden"><div class="t" style="left:3px;top:5.27px;font-size:11.5px;color:#000;transform:scaleX(0.8558);transform-origin:left">BEOGRAD (VRAČAR)  NJEGOŠEVA 19</div></div>
<div class="a" style="left:0px;top:228px;width:64px;height:19px;overflow:hidden"><div class="t" style="left:3px;top:5.27px;font-size:11.5px;color:#000;transform:scaleX(0.9829);transform-origin:left">20.05.25</div></div>
<div class="a" style="left:64px;top:228px;width:85px;height:19px;overflow:hidden"><div class="t" style="left:3px;top:5.27px;font-size:11.5px;color:#000;transform:scaleX(0.9506);transform-origin:left">KL005-00015</div></div>
<div class="a" style="left:149px;top:228px;width:28px;height:19px;overflow:hidden"><div class="t" style="right:3.5px;top:5.27px;font-size:11.5px;color:#000;transform:scaleX(0.9800);transform-origin:right">1</div></div>
<div class="a" style="left:177px;top:228px;width:24px;height:19px;overflow:hidden"><div class="t" style="left:3px;top:5.27px;font-size:11.5px;color:#000;transform:scaleX(0.8300);transform-origin:left">KL</div></div>
<div class="a" style="left:201px;top:228px;width:42px;height:19px;overflow:hidden"><div class="t" style="right:3.5px;top:5.27px;font-size:11.5px;color:#000;transform:scaleX(0.9800);transform-origin:right">03236</div></div>
<div class="a" style="left:243px;top:228px;width:247px;height:19px;overflow:hidden"><div class="t" style="left:3px;top:5.27px;font-size:11.5px;color:#000;transform:scaleX(0.8394);transform-origin:left">DP PRODUCTS DOO BEOGRAD</div></div>
<div class="a" style="left:490px;top:228px;width:85px;height:19px;overflow:hidden"><div class="t" style="right:3.5px;top:5.27px;font-size:11.5px;color:#000;transform:scaleX(0.9829);transform-origin:right">1,20</div></div>
<div class="a" style="left:575px;top:228px;width:85px;height:19px;overflow:hidden"><div class="t" style="right:3.5px;top:5.27px;font-size:11.5px;color:#000;transform:scaleX(0.9829);transform-origin:right">0,00</div></div>
<svg class="a" style="left:664px;top:232px" width="14" height="12"><path d="M1 6.5 L5 10.5 L13.2 1.2" fill="none" stroke="#88A2C8" stroke-width="1.7"/></svg>
<div class="a" style="left:682px;top:228px;width:126px;height:19px;overflow:hidden"><div class="t" style="left:3px;top:5.27px;font-size:11.5px;color:#000;transform:scaleX(0.9498);transform-origin:left">ASD od 20.05.2025</div></div>
<div class="a" style="left:808px;top:228px;width:190px;height:19px;overflow:hidden"><div class="t" style="left:3px;top:5.27px;font-size:11.5px;color:#000;transform:scaleX(0.8558);transform-origin:left">BEOGRAD (VRAČAR)  NJEGOŠEVA 19</div></div>
<div class="a" style="left:0px;top:247px;width:64px;height:19px;overflow:hidden"><div class="t" style="left:3px;top:5.27px;font-size:11.5px;color:#000;transform:scaleX(0.9829);transform-origin:left">23.05.25</div></div>
<div class="a" style="left:64px;top:247px;width:85px;height:19px;overflow:hidden"><div class="t" style="left:3px;top:5.27px;font-size:11.5px;color:#000;transform:scaleX(0.9506);transform-origin:left">KL005-00016</div></div>
<div class="a" style="left:149px;top:247px;width:28px;height:19px;overflow:hidden"><div class="t" style="right:3.5px;top:5.27px;font-size:11.5px;color:#000;transform:scaleX(0.9800);transform-origin:right">1</div></div>
<div class="a" style="left:177px;top:247px;width:24px;height:19px;overflow:hidden"><div class="t" style="left:3px;top:5.27px;font-size:11.5px;color:#000;transform:scaleX(0.8300);transform-origin:left">KL</div></div>
<div class="a" style="left:201px;top:247px;width:42px;height:19px;overflow:hidden"><div class="t" style="right:3.5px;top:5.27px;font-size:11.5px;color:#000;transform:scaleX(0.9800);transform-origin:right">00000</div></div>
<div class="a" style="left:243px;top:247px;width:247px;height:19px;overflow:hidden"><div class="t" style="left:3px;top:5.27px;font-size:11.5px;color:#000;transform:scaleX(0.8354);transform-origin:left">NIVELACIJA CENA</div></div>
<div class="a" style="left:490px;top:247px;width:85px;height:19px;overflow:hidden"><div class="t" style="right:3.5px;top:5.27px;font-size:11.5px;color:#000;transform:scaleX(0.9825);transform-origin:right">47.873,00</div></div>
<div class="a" style="left:575px;top:247px;width:85px;height:19px;overflow:hidden"><div class="t" style="right:3.5px;top:5.27px;font-size:11.5px;color:#000;transform:scaleX(0.9829);transform-origin:right">0,00</div></div>
<svg class="a" style="left:664px;top:251px" width="14" height="12"><path d="M1 6.5 L5 10.5 L13.2 1.2" fill="none" stroke="#88A2C8" stroke-width="1.7"/></svg>
<div class="a" style="left:682px;top:247px;width:126px;height:19px;overflow:hidden"><div class="t" style="left:3px;top:5.27px;font-size:11.5px;color:#000;transform:scaleX(0.9506);transform-origin:left">KL005-00016</div></div>
<div class="a" style="left:0px;top:266px;width:64px;height:19px;overflow:hidden"><div class="t" style="left:3px;top:5.27px;font-size:11.5px;color:#000;transform:scaleX(0.9829);transform-origin:left">23.05.25</div></div>
<div class="a" style="left:64px;top:266px;width:85px;height:19px;overflow:hidden"><div class="t" style="left:3px;top:5.27px;font-size:11.5px;color:#000;transform:scaleX(0.9506);transform-origin:left">KL005-00017</div></div>
<div class="a" style="left:149px;top:266px;width:28px;height:19px;overflow:hidden"><div class="t" style="right:3.5px;top:5.27px;font-size:11.5px;color:#000;transform:scaleX(0.9800);transform-origin:right">1</div></div>
<div class="a" style="left:177px;top:266px;width:24px;height:19px;overflow:hidden"><div class="t" style="left:3px;top:5.27px;font-size:11.5px;color:#000;transform:scaleX(0.8300);transform-origin:left">KL</div></div>
<div class="a" style="left:201px;top:266px;width:42px;height:19px;overflow:hidden"><div class="t" style="right:3.5px;top:5.27px;font-size:11.5px;color:#000;transform:scaleX(0.9800);transform-origin:right">03236</div></div>
<div class="a" style="left:243px;top:266px;width:247px;height:19px;overflow:hidden"><div class="t" style="left:3px;top:5.27px;font-size:11.5px;color:#000;transform:scaleX(0.8394);transform-origin:left">DP PRODUCTS DOO BEOGRAD</div></div>
<div class="a" style="left:490px;top:266px;width:85px;height:19px;overflow:hidden"><div class="t" style="right:3.5px;top:5.27px;font-size:11.5px;color:#000;transform:scaleX(0.9829);transform-origin:right">1.990,00</div></div>
<div class="a" style="left:575px;top:266px;width:85px;height:19px;overflow:hidden"><div class="t" style="right:3.5px;top:5.27px;font-size:11.5px;color:#000;transform:scaleX(0.9829);transform-origin:right">0,00</div></div>
<svg class="a" style="left:664px;top:270px" width="14" height="12"><path d="M1 6.5 L5 10.5 L13.2 1.2" fill="none" stroke="#88A2C8" stroke-width="1.7"/></svg>
<div class="a" style="left:682px;top:266px;width:126px;height:19px;overflow:hidden"><div class="t" style="left:3px;top:5.27px;font-size:11.5px;color:#000;transform:scaleX(0.9339);transform-origin:left">RFDSE od 23.05.2025</div></div>
<div class="a" style="left:808px;top:266px;width:190px;height:19px;overflow:hidden"><div class="t" style="left:3px;top:5.27px;font-size:11.5px;color:#000;transform:scaleX(0.8558);transform-origin:left">BEOGRAD (VRAČAR)  NJEGOŠEVA 19</div></div>
<div class="a" style="left:0px;top:285px;width:64px;height:19px;overflow:hidden"><div class="t" style="left:3px;top:5.27px;font-size:11.5px;color:#000;transform:scaleX(0.9829);transform-origin:left">27.05.25</div></div>
<div class="a" style="left:64px;top:285px;width:85px;height:19px;overflow:hidden"><div class="t" style="left:3px;top:5.27px;font-size:11.5px;color:#000;transform:scaleX(0.9506);transform-origin:left">KL005-00018</div></div>
<div class="a" style="left:149px;top:285px;width:28px;height:19px;overflow:hidden"><div class="t" style="right:3.5px;top:5.27px;font-size:11.5px;color:#000;transform:scaleX(0.9800);transform-origin:right">1</div></div>
<div class="a" style="left:177px;top:285px;width:24px;height:19px;overflow:hidden"><div class="t" style="left:3px;top:5.27px;font-size:11.5px;color:#000;transform:scaleX(0.8300);transform-origin:left">KL</div></div>
<div class="a" style="left:201px;top:285px;width:42px;height:19px;overflow:hidden"><div class="t" style="right:3.5px;top:5.27px;font-size:11.5px;color:#000;transform:scaleX(0.9800);transform-origin:right">03236</div></div>
<div class="a" style="left:243px;top:285px;width:247px;height:19px;overflow:hidden"><div class="t" style="left:3px;top:5.27px;font-size:11.5px;color:#000;transform:scaleX(0.8394);transform-origin:left">DP PRODUCTS DOO BEOGRAD</div></div>
<div class="a" style="left:490px;top:285px;width:85px;height:19px;overflow:hidden"><div class="t" style="right:3.5px;top:5.27px;font-size:11.5px;color:#000;transform:scaleX(0.9818);transform-origin:right">200,00</div></div>
<div class="a" style="left:575px;top:285px;width:85px;height:19px;overflow:hidden"><div class="t" style="right:3.5px;top:5.27px;font-size:11.5px;color:#000;transform:scaleX(0.9829);transform-origin:right">0,00</div></div>
<svg class="a" style="left:664px;top:289px" width="14" height="12"><path d="M1 6.5 L5 10.5 L13.2 1.2" fill="none" stroke="#88A2C8" stroke-width="1.7"/></svg>
<div class="a" style="left:682px;top:285px;width:126px;height:19px;overflow:hidden"><div class="t" style="left:3px;top:5.27px;font-size:11.5px;color:#000;transform:scaleX(0.9686);transform-origin:left">25-RN001000007 od 27.05.2025</div></div>
<div class="a" style="left:808px;top:285px;width:190px;height:19px;overflow:hidden"><div class="t" style="left:3px;top:5.27px;font-size:11.5px;color:#000;transform:scaleX(0.8558);transform-origin:left">BEOGRAD (VRAČAR)  NJEGOŠEVA 19</div></div>
<div class="a" style="left:0px;top:304px;width:64px;height:19px;overflow:hidden"><div class="t" style="left:3px;top:5.27px;font-size:11.5px;color:#000;transform:scaleX(0.9829);transform-origin:left">30.05.25</div></div>
<div class="a" style="left:64px;top:304px;width:85px;height:19px;overflow:hidden"><div class="t" style="left:3px;top:5.27px;font-size:11.5px;color:#000;transform:scaleX(0.9484);transform-origin:left">KA005-00001</div></div>
<div class="a" style="left:149px;top:304px;width:28px;height:19px;overflow:hidden"><div class="t" style="right:3.5px;top:5.27px;font-size:11.5px;color:#000;transform:scaleX(0.9800);transform-origin:right">1</div></div>
<div class="a" style="left:177px;top:304px;width:24px;height:19px;overflow:hidden"><div class="t" style="left:3px;top:5.27px;font-size:11.5px;color:#000;transform:scaleX(0.8300);transform-origin:left">KA</div></div>
<div class="a" style="left:201px;top:304px;width:42px;height:19px;overflow:hidden"><div class="t" style="right:3.5px;top:5.27px;font-size:11.5px;color:#000;transform:scaleX(0.9800);transform-origin:right">00000</div></div>
<div class="a" style="left:243px;top:304px;width:247px;height:19px;overflow:hidden"><div class="t" style="left:3px;top:5.27px;font-size:11.5px;color:#000;transform:scaleX(0.8300);transform-origin:left">KALKULACIJA</div></div>
<div class="a" style="left:490px;top:304px;width:85px;height:19px;overflow:hidden"><div class="t" style="right:3.5px;top:5.27px;font-size:11.5px;color:#000;transform:scaleX(0.9818);transform-origin:right">118,80</div></div>
<div class="a" style="left:575px;top:304px;width:85px;height:19px;overflow:hidden"><div class="t" style="right:3.5px;top:5.27px;font-size:11.5px;color:#000;transform:scaleX(0.9829);transform-origin:right">0,00</div></div>
<svg class="a" style="left:664px;top:308px" width="14" height="12"><path d="M1 6.5 L5 10.5 L13.2 1.2" fill="none" stroke="#88A2C8" stroke-width="1.7"/></svg>
<div class="a" style="left:682px;top:304px;width:126px;height:19px;overflow:hidden"><div class="t" style="left:3px;top:5.27px;font-size:11.5px;color:#000;transform:scaleX(0.9464);transform-origin:left">RN005000015</div></div>
<div class="a" style="left:0px;top:323px;width:64px;height:19px;overflow:hidden"><div class="t" style="left:3px;top:5.27px;font-size:11.5px;color:#000;transform:scaleX(0.9829);transform-origin:left">30.05.25</div></div>
<div class="a" style="left:64px;top:323px;width:85px;height:19px;overflow:hidden"><div class="t" style="left:3px;top:5.27px;font-size:11.5px;color:#000;transform:scaleX(0.9484);transform-origin:left">KA005-00002</div></div>
<div class="a" style="left:149px;top:323px;width:28px;height:19px;overflow:hidden"><div class="t" style="right:3.5px;top:5.27px;font-size:11.5px;color:#000;transform:scaleX(0.9800);transform-origin:right">1</div></div>
<div class="a" style="left:177px;top:323px;width:24px;height:19px;overflow:hidden"><div class="t" style="left:3px;top:5.27px;font-size:11.5px;color:#000;transform:scaleX(0.8300);transform-origin:left">KA</div></div>
<div class="a" style="left:201px;top:323px;width:42px;height:19px;overflow:hidden"><div class="t" style="right:3.5px;top:5.27px;font-size:11.5px;color:#000;transform:scaleX(0.9800);transform-origin:right">00011</div></div>
<div class="a" style="left:243px;top:323px;width:247px;height:19px;overflow:hidden"><div class="t" style="left:3px;top:5.27px;font-size:11.5px;color:#000;transform:scaleX(0.8366);transform-origin:left">NEGOTIN DOO</div></div>
<div class="a" style="left:490px;top:323px;width:85px;height:19px;overflow:hidden"><div class="t" style="right:3.5px;top:5.27px;font-size:11.5px;color:#000;transform:scaleX(0.9829);transform-origin:right">0,00</div></div>
<div class="a" style="left:575px;top:323px;width:85px;height:19px;overflow:hidden"><div class="t" style="right:3.5px;top:5.27px;font-size:11.5px;color:#000;transform:scaleX(0.9818);transform-origin:right">120,00</div></div>
<svg class="a" style="left:664px;top:327px" width="14" height="12"><path d="M1 6.5 L5 10.5 L13.2 1.2" fill="none" stroke="#88A2C8" stroke-width="1.7"/></svg>
<div class="a" style="left:682px;top:323px;width:126px;height:19px;overflow:hidden"><div class="t" style="left:3px;top:5.27px;font-size:11.5px;color:#000;transform:scaleX(0.9464);transform-origin:left">RN005000015</div></div>
<div class="a" style="left:808px;top:323px;width:190px;height:19px;overflow:hidden"><div class="t" style="left:3px;top:5.27px;font-size:11.5px;color:#000;transform:scaleX(0.8503);transform-origin:left">NEGOTIN  MIRE VINKLAJT 7</div></div>
<div class="a" style="left:0px;top:342px;width:64px;height:19px;overflow:hidden"><div class="t" style="left:3px;top:5.27px;font-size:11.5px;color:#000;transform:scaleX(0.9829);transform-origin:left">13.06.25</div></div>
<div class="a" style="left:64px;top:342px;width:85px;height:19px;overflow:hidden"><div class="t" style="left:3px;top:5.27px;font-size:11.5px;color:#000;transform:scaleX(0.9506);transform-origin:left">KA005-0613/2</div></div>
<div class="a" style="left:149px;top:342px;width:28px;height:19px;overflow:hidden"><div class="t" style="right:3.5px;top:5.27px;font-size:11.5px;color:#000;transform:scaleX(0.9800);transform-origin:right">1</div></div>
<div class="a" style="left:177px;top:342px;width:24px;height:19px;overflow:hidden"><div class="t" style="left:3px;top:5.27px;font-size:11.5px;color:#000;transform:scaleX(0.8300);transform-origin:left">KA</div></div>
<div class="a" style="left:201px;top:342px;width:42px;height:19px;overflow:hidden"><div class="t" style="right:3.5px;top:5.27px;font-size:11.5px;color:#000;transform:scaleX(0.9800);transform-origin:right">00000</div></div>
<div class="a" style="left:243px;top:342px;width:247px;height:19px;overflow:hidden"><div class="t" style="left:3px;top:5.27px;font-size:11.5px;color:#000;transform:scaleX(0.8374);transform-origin:left">NIVELACIJA CENA SISTEM</div></div>
<div class="a" style="left:490px;top:342px;width:85px;height:19px;overflow:hidden"><div class="t" style="right:3.5px;top:5.27px;font-size:11.5px;color:#000;transform:scaleX(0.9829);transform-origin:right">0,00</div></div>
<div class="a" style="left:575px;top:342px;width:85px;height:19px;overflow:hidden"><div class="t" style="right:3.5px;top:5.27px;font-size:11.5px;color:#000;transform:scaleX(0.9818);transform-origin:right">544,10</div></div>
<svg class="a" style="left:664px;top:346px" width="14" height="12"><path d="M1 6.5 L5 10.5 L13.2 1.2" fill="none" stroke="#88A2C8" stroke-width="1.7"/></svg>
<div class="a" style="left:682px;top:342px;width:126px;height:19px;overflow:hidden"><div class="t" style="left:3px;top:5.27px;font-size:11.5px;color:#000;transform:scaleX(0.9506);transform-origin:left">KA005-0613/2</div></div>
<div class="a" style="left:0px;top:361px;width:64px;height:19px;overflow:hidden"><div class="t" style="left:3px;top:5.27px;font-size:11.5px;color:#000;transform:scaleX(0.9829);transform-origin:left">16.06.25</div></div>
<div class="a" style="left:64px;top:361px;width:85px;height:19px;overflow:hidden"><div class="t" style="left:3px;top:5.27px;font-size:11.5px;color:#000;transform:scaleX(0.9430);transform-origin:left">DN005-0001</div></div>
<div class="a" style="left:149px;top:361px;width:28px;height:19px;overflow:hidden"><div class="t" style="right:3.5px;top:5.27px;font-size:11.5px;color:#000;transform:scaleX(0.9800);transform-origin:right">1</div></div>
<div class="a" style="left:177px;top:361px;width:24px;height:19px;overflow:hidden"><div class="t" style="left:3px;top:5.27px;font-size:11.5px;color:#000;transform:scaleX(0.8300);transform-origin:left">DN</div></div>
<div class="a" style="left:201px;top:361px;width:42px;height:19px;overflow:hidden"><div class="t" style="right:3.5px;top:5.27px;font-size:11.5px;color:#000;transform:scaleX(0.9800);transform-origin:right">00000</div></div>
<div class="a" style="left:243px;top:361px;width:247px;height:19px;overflow:hidden"><div class="t" style="left:3px;top:5.27px;font-size:11.5px;color:#000;transform:scaleX(0.8364);transform-origin:left">DNEVNI PAZAR</div></div>
<div class="a" style="left:490px;top:361px;width:85px;height:19px;overflow:hidden"><div class="t" style="right:3.5px;top:5.27px;font-size:11.5px;color:#000;transform:scaleX(0.9835);transform-origin:right">-19.490.872,25</div></div>
<div class="a" style="left:575px;top:361px;width:85px;height:19px;overflow:hidden"><div class="t" style="right:3.5px;top:5.27px;font-size:11.5px;color:#000;transform:scaleX(0.9829);transform-origin:right">0,00</div></div>
<svg class="a" style="left:664px;top:365px" width="14" height="12"><path d="M1 6.5 L5 10.5 L13.2 1.2" fill="none" stroke="#88A2C8" stroke-width="1.7"/></svg>
<div class="a" style="left:682px;top:361px;width:126px;height:19px;overflow:hidden"><div class="t" style="left:3px;top:5.27px;font-size:11.5px;color:#000;transform:scaleX(0.9430);transform-origin:left">DN005-0001</div></div>
<div class="a" style="left:0px;top:380px;width:64px;height:19px;overflow:hidden"><div class="t" style="left:3px;top:5.27px;font-size:11.5px;color:#000;transform:scaleX(0.9829);transform-origin:left">19.06.25</div></div>
<div class="a" style="left:64px;top:380px;width:85px;height:19px;overflow:hidden"><div class="t" style="left:3px;top:5.27px;font-size:11.5px;color:#000;transform:scaleX(0.9506);transform-origin:left">KL005-00019</div></div>
<div class="a" style="left:149px;top:380px;width:28px;height:19px;overflow:hidden"><div class="t" style="right:3.5px;top:5.27px;font-size:11.5px;color:#000;transform:scaleX(0.9800);transform-origin:right">1</div></div>
<div class="a" style="left:177px;top:380px;width:24px;height:19px;overflow:hidden"><div class="t" style="left:3px;top:5.27px;font-size:11.5px;color:#000;transform:scaleX(0.8300);transform-origin:left">KL</div></div>
<div class="a" style="left:201px;top:380px;width:42px;height:19px;overflow:hidden"><div class="t" style="right:3.5px;top:5.27px;font-size:11.5px;color:#000;transform:scaleX(0.9800);transform-origin:right">03236</div></div>
<div class="a" style="left:243px;top:380px;width:247px;height:19px;overflow:hidden"><div class="t" style="left:3px;top:5.27px;font-size:11.5px;color:#000;transform:scaleX(0.8394);transform-origin:left">DP PRODUCTS DOO BEOGRAD</div></div>
<div class="a" style="left:490px;top:380px;width:85px;height:19px;overflow:hidden"><div class="t" style="right:3.5px;top:5.27px;font-size:11.5px;color:#000;transform:scaleX(0.9818);transform-origin:right">120,00</div></div>
<div class="a" style="left:575px;top:380px;width:85px;height:19px;overflow:hidden"><div class="t" style="right:3.5px;top:5.27px;font-size:11.5px;color:#000;transform:scaleX(0.9829);transform-origin:right">0,00</div></div>
<svg class="a" style="left:664px;top:384px" width="14" height="12"><path d="M1 6.5 L5 10.5 L13.2 1.2" fill="none" stroke="#88A2C8" stroke-width="1.7"/></svg>
<div class="a" style="left:682px;top:380px;width:126px;height:19px;overflow:hidden"><div class="t" style="left:3px;top:5.27px;font-size:11.5px;color:#000;transform:scaleX(0.9333);transform-origin:left">SDFGS od 19.06.2025</div></div>
<div class="a" style="left:808px;top:380px;width:190px;height:19px;overflow:hidden"><div class="t" style="left:3px;top:5.27px;font-size:11.5px;color:#000;transform:scaleX(0.8558);transform-origin:left">BEOGRAD (VRAČAR)  NJEGOŠEVA 19</div></div>
<div class="a" style="left:0px;top:399px;width:64px;height:19px;overflow:hidden"><div class="t" style="left:3px;top:5.27px;font-size:11.5px;color:#000;transform:scaleX(0.9829);transform-origin:left">08.07.25</div></div>
<div class="a" style="left:64px;top:399px;width:85px;height:19px;overflow:hidden"><div class="t" style="left:3px;top:5.27px;font-size:11.5px;color:#000;transform:scaleX(0.9506);transform-origin:left">KL005-00020</div></div>
<div class="a" style="left:149px;top:399px;width:28px;height:19px;overflow:hidden"><div class="t" style="right:3.5px;top:5.27px;font-size:11.5px;color:#000;transform:scaleX(0.9800);transform-origin:right">1</div></div>
<div class="a" style="left:177px;top:399px;width:24px;height:19px;overflow:hidden"><div class="t" style="left:3px;top:5.27px;font-size:11.5px;color:#000;transform:scaleX(0.8300);transform-origin:left">KL</div></div>
<div class="a" style="left:201px;top:399px;width:42px;height:19px;overflow:hidden"><div class="t" style="right:3.5px;top:5.27px;font-size:11.5px;color:#000;transform:scaleX(0.9800);transform-origin:right">03236</div></div>
<div class="a" style="left:243px;top:399px;width:247px;height:19px;overflow:hidden"><div class="t" style="left:3px;top:5.27px;font-size:11.5px;color:#000;transform:scaleX(0.8394);transform-origin:left">DP PRODUCTS DOO BEOGRAD</div></div>
<div class="a" style="left:490px;top:399px;width:85px;height:19px;overflow:hidden"><div class="t" style="right:3.5px;top:5.27px;font-size:11.5px;color:#000;transform:scaleX(0.9829);transform-origin:right">1.000,00</div></div>
<div class="a" style="left:575px;top:399px;width:85px;height:19px;overflow:hidden"><div class="t" style="right:3.5px;top:5.27px;font-size:11.5px;color:#000;transform:scaleX(0.9829);transform-origin:right">0,00</div></div>
<svg class="a" style="left:664px;top:403px" width="14" height="12"><path d="M1 6.5 L5 10.5 L13.2 1.2" fill="none" stroke="#88A2C8" stroke-width="1.7"/></svg>
<div class="a" style="left:682px;top:399px;width:126px;height:19px;overflow:hidden"><div class="t" style="left:3px;top:5.27px;font-size:11.5px;color:#000;transform:scaleX(0.9686);transform-origin:left">25-RN001000089 od 08.07.2025</div></div>
<div class="a" style="left:808px;top:399px;width:190px;height:19px;overflow:hidden"><div class="t" style="left:3px;top:5.27px;font-size:11.5px;color:#000;transform:scaleX(0.8558);transform-origin:left">BEOGRAD (VRAČAR)  NJEGOŠEVA 19</div></div>
<div class="a" style="left:0px;top:418px;width:64px;height:19px;overflow:hidden"><div class="t" style="left:3px;top:5.27px;font-size:11.5px;color:#000;transform:scaleX(0.9829);transform-origin:left">21.07.25</div></div>
<div class="a" style="left:64px;top:418px;width:85px;height:19px;overflow:hidden"><div class="t" style="left:3px;top:5.27px;font-size:11.5px;color:#000;transform:scaleX(0.9506);transform-origin:left">KL005-00021</div></div>
<div class="a" style="left:149px;top:418px;width:28px;height:19px;overflow:hidden"><div class="t" style="right:3.5px;top:5.27px;font-size:11.5px;color:#000;transform:scaleX(0.9800);transform-origin:right">1</div></div>
<div class="a" style="left:177px;top:418px;width:24px;height:19px;overflow:hidden"><div class="t" style="left:3px;top:5.27px;font-size:11.5px;color:#000;transform:scaleX(0.8300);transform-origin:left">KL</div></div>
<div class="a" style="left:201px;top:418px;width:42px;height:19px;overflow:hidden"><div class="t" style="right:3.5px;top:5.27px;font-size:11.5px;color:#000;transform:scaleX(0.9800);transform-origin:right">00011</div></div>
<div class="a" style="left:243px;top:418px;width:247px;height:19px;overflow:hidden"><div class="t" style="left:3px;top:5.27px;font-size:11.5px;color:#000;transform:scaleX(0.8366);transform-origin:left">NEGOTIN DOO</div></div>
<div class="a" style="left:490px;top:418px;width:85px;height:19px;overflow:hidden"><div class="t" style="right:3.5px;top:5.27px;font-size:11.5px;color:#000;transform:scaleX(0.9842);transform-origin:right">-1.990,00</div></div>
<div class="a" style="left:575px;top:418px;width:85px;height:19px;overflow:hidden"><div class="t" style="right:3.5px;top:5.27px;font-size:11.5px;color:#000;transform:scaleX(0.9829);transform-origin:right">0,00</div></div>
<svg class="a" style="left:664px;top:422px" width="14" height="12"><path d="M1 6.5 L5 10.5 L13.2 1.2" fill="none" stroke="#88A2C8" stroke-width="1.7"/></svg>
<div class="a" style="left:682px;top:418px;width:126px;height:19px;overflow:hidden"><div class="t" style="left:3px;top:5.27px;font-size:11.5px;color:#000;transform:scaleX(0.9874);transform-origin:left">@@32111 od 21.07.2025</div></div>
<div class="a" style="left:808px;top:418px;width:190px;height:19px;overflow:hidden"><div class="t" style="left:3px;top:5.27px;font-size:11.5px;color:#000;transform:scaleX(0.8503);transform-origin:left">NEGOTIN  MIRE VINKLAJT 7</div></div>
<div class="a" style="left:0px;top:437px;width:64px;height:19px;overflow:hidden"><div class="t" style="left:3px;top:5.27px;font-size:11.5px;color:#000;transform:scaleX(0.9829);transform-origin:left">23.07.25</div></div>
<div class="a" style="left:64px;top:437px;width:85px;height:19px;overflow:hidden"><div class="t" style="left:3px;top:5.27px;font-size:11.5px;color:#000;transform:scaleX(0.9506);transform-origin:left">KL005-00022</div></div>
<div class="a" style="left:149px;top:437px;width:28px;height:19px;overflow:hidden"><div class="t" style="right:3.5px;top:5.27px;font-size:11.5px;color:#000;transform:scaleX(0.9800);transform-origin:right">1</div></div>
<div class="a" style="left:177px;top:437px;width:24px;height:19px;overflow:hidden"><div class="t" style="left:3px;top:5.27px;font-size:11.5px;color:#000;transform:scaleX(0.8300);transform-origin:left">KL</div></div>
<div class="a" style="left:201px;top:437px;width:42px;height:19px;overflow:hidden"><div class="t" style="right:3.5px;top:5.27px;font-size:11.5px;color:#000;transform:scaleX(0.9800);transform-origin:right">03236</div></div>
<div class="a" style="left:243px;top:437px;width:247px;height:19px;overflow:hidden"><div class="t" style="left:3px;top:5.27px;font-size:11.5px;color:#000;transform:scaleX(0.8394);transform-origin:left">DP PRODUCTS DOO BEOGRAD</div></div>
<div class="a" style="left:490px;top:437px;width:85px;height:19px;overflow:hidden"><div class="t" style="right:3.5px;top:5.27px;font-size:11.5px;color:#000;transform:scaleX(0.9822);transform-origin:right">12,00</div></div>
<div class="a" style="left:575px;top:437px;width:85px;height:19px;overflow:hidden"><div class="t" style="right:3.5px;top:5.27px;font-size:11.5px;color:#000;transform:scaleX(0.9829);transform-origin:right">0,00</div></div>
<svg class="a" style="left:664px;top:441px" width="14" height="12"><path d="M1 6.5 L5 10.5 L13.2 1.2" fill="none" stroke="#88A2C8" stroke-width="1.7"/></svg>
<div class="a" style="left:682px;top:437px;width:126px;height:19px;overflow:hidden"><div class="t" style="left:3px;top:5.27px;font-size:11.5px;color:#000;transform:scaleX(0.9333);transform-origin:left">ADADA od 23.07.2025</div></div>
<div class="a" style="left:808px;top:437px;width:190px;height:19px;overflow:hidden"><div class="t" style="left:3px;top:5.27px;font-size:11.5px;color:#000;transform:scaleX(0.8558);transform-origin:left">BEOGRAD (VRAČAR)  NJEGOŠEVA 19</div></div>
<div class="a" style="left:0px;top:456px;width:64px;height:19px;overflow:hidden"><div class="t" style="left:3px;top:5.27px;font-size:11.5px;color:#000;transform:scaleX(0.9829);transform-origin:left">23.07.25</div></div>
<div class="a" style="left:64px;top:456px;width:85px;height:19px;overflow:hidden"><div class="t" style="left:3px;top:5.27px;font-size:11.5px;color:#000;transform:scaleX(0.9506);transform-origin:left">KL005-00023</div></div>
<div class="a" style="left:149px;top:456px;width:28px;height:19px;overflow:hidden"><div class="t" style="right:3.5px;top:5.27px;font-size:11.5px;color:#000;transform:scaleX(0.9800);transform-origin:right">1</div></div>
<div class="a" style="left:177px;top:456px;width:24px;height:19px;overflow:hidden"><div class="t" style="left:3px;top:5.27px;font-size:11.5px;color:#000;transform:scaleX(0.8300);transform-origin:left">KL</div></div>
<div class="a" style="left:201px;top:456px;width:42px;height:19px;overflow:hidden"><div class="t" style="right:3.5px;top:5.27px;font-size:11.5px;color:#000;transform:scaleX(0.9800);transform-origin:right">00000</div></div>
<div class="a" style="left:243px;top:456px;width:247px;height:19px;overflow:hidden"><div class="t" style="left:3px;top:5.27px;font-size:11.5px;color:#000;transform:scaleX(0.8300);transform-origin:left">INTERNI</div></div>
<div class="a" style="left:490px;top:456px;width:85px;height:19px;overflow:hidden"><div class="t" style="right:3.5px;top:5.27px;font-size:11.5px;color:#000;transform:scaleX(0.9818);transform-origin:right">507,10</div></div>
<div class="a" style="left:575px;top:456px;width:85px;height:19px;overflow:hidden"><div class="t" style="right:3.5px;top:5.27px;font-size:11.5px;color:#000;transform:scaleX(0.9829);transform-origin:right">0,00</div></div>
<svg class="a" style="left:664px;top:460px" width="14" height="12"><path d="M1 6.5 L5 10.5 L13.2 1.2" fill="none" stroke="#88A2C8" stroke-width="1.7"/></svg>
<div class="a" style="left:682px;top:456px;width:126px;height:19px;overflow:hidden"><div class="t" style="left:3px;top:5.27px;font-size:11.5px;color:#000;transform:scaleX(0.9853);transform-origin:left">321 od 23.07.2025</div></div>
<div class="a" style="left:0px;top:475px;width:64px;height:19px;overflow:hidden"><div class="t" style="left:3px;top:5.27px;font-size:11.5px;color:#000;transform:scaleX(0.9829);transform-origin:left">25.07.25</div></div>
<div class="a" style="left:64px;top:475px;width:85px;height:19px;overflow:hidden"><div class="t" style="left:3px;top:5.27px;font-size:11.5px;color:#000;transform:scaleX(0.9484);transform-origin:left">KA005-00003</div></div>
<div class="a" style="left:149px;top:475px;width:28px;height:19px;overflow:hidden"><div class="t" style="right:3.5px;top:5.27px;font-size:11.5px;color:#000;transform:scaleX(0.9800);transform-origin:right">1</div></div>
<div class="a" style="left:177px;top:475px;width:24px;height:19px;overflow:hidden"><div class="t" style="left:3px;top:5.27px;font-size:11.5px;color:#000;transform:scaleX(0.8300);transform-origin:left">KA</div></div>
<div class="a" style="left:201px;top:475px;width:42px;height:19px;overflow:hidden"><div class="t" style="right:3.5px;top:5.27px;font-size:11.5px;color:#000;transform:scaleX(0.9800);transform-origin:right">00011</div></div>
<div class="a" style="left:243px;top:475px;width:247px;height:19px;overflow:hidden"><div class="t" style="left:3px;top:5.27px;font-size:11.5px;color:#000;transform:scaleX(0.8366);transform-origin:left">NEGOTIN DOO</div></div>
<div class="a" style="left:490px;top:475px;width:85px;height:19px;overflow:hidden"><div class="t" style="right:3.5px;top:5.27px;font-size:11.5px;color:#000;transform:scaleX(0.9829);transform-origin:right">0,00</div></div>
<div class="a" style="left:575px;top:475px;width:85px;height:19px;overflow:hidden"><div class="t" style="right:3.5px;top:5.27px;font-size:11.5px;color:#000;transform:scaleX(0.9829);transform-origin:right">6.000,00</div></div>
<svg class="a" style="left:664px;top:479px" width="14" height="12"><path d="M1 6.5 L5 10.5 L13.2 1.2" fill="none" stroke="#88A2C8" stroke-width="1.7"/></svg>
<div class="a" style="left:682px;top:475px;width:126px;height:19px;overflow:hidden"><div class="t" style="left:3px;top:5.27px;font-size:11.5px;color:#000;transform:scaleX(0.9464);transform-origin:left">RN005000023</div></div>
<div class="a" style="left:808px;top:475px;width:190px;height:19px;overflow:hidden"><div class="t" style="left:3px;top:5.27px;font-size:11.5px;color:#000;transform:scaleX(0.8503);transform-origin:left">NEGOTIN  MIRE VINKLAJT 7</div></div>
<div class="a" style="left:0px;top:494px;width:64px;height:19px;overflow:hidden"><div class="t" style="left:3px;top:5.27px;font-size:11.5px;color:#000;transform:scaleX(0.9829);transform-origin:left">25.07.25</div></div>
<div class="a" style="left:64px;top:494px;width:85px;height:19px;overflow:hidden"><div class="t" style="left:3px;top:5.27px;font-size:11.5px;color:#000;transform:scaleX(0.9484);transform-origin:left">KA005-00004</div></div>
<div class="a" style="left:149px;top:494px;width:28px;height:19px;overflow:hidden"><div class="t" style="right:3.5px;top:5.27px;font-size:11.5px;color:#000;transform:scaleX(0.9800);transform-origin:right">1</div></div>
<div class="a" style="left:177px;top:494px;width:24px;height:19px;overflow:hidden"><div class="t" style="left:3px;top:5.27px;font-size:11.5px;color:#000;transform:scaleX(0.8300);transform-origin:left">KA</div></div>
<div class="a" style="left:201px;top:494px;width:42px;height:19px;overflow:hidden"><div class="t" style="right:3.5px;top:5.27px;font-size:11.5px;color:#000;transform:scaleX(0.9800);transform-origin:right">00011</div></div>
<div class="a" style="left:243px;top:494px;width:247px;height:19px;overflow:hidden"><div class="t" style="left:3px;top:5.27px;font-size:11.5px;color:#000;transform:scaleX(0.8366);transform-origin:left">NEGOTIN DOO</div></div>
<div class="a" style="left:490px;top:494px;width:85px;height:19px;overflow:hidden"><div class="t" style="right:3.5px;top:5.27px;font-size:11.5px;color:#000;transform:scaleX(0.9829);transform-origin:right">0,00</div></div>
<div class="a" style="left:575px;top:494px;width:85px;height:19px;overflow:hidden"><div class="t" style="right:3.5px;top:5.27px;font-size:11.5px;color:#000;transform:scaleX(0.9842);transform-origin:right">-6.000,00</div></div>
<svg class="a" style="left:664px;top:498px" width="14" height="12"><path d="M1 6.5 L5 10.5 L13.2 1.2" fill="none" stroke="#88A2C8" stroke-width="1.7"/></svg>
<div class="a" style="left:682px;top:494px;width:126px;height:19px;overflow:hidden"><div class="t" style="left:3px;top:5.27px;font-size:11.5px;color:#000;transform:scaleX(0.9464);transform-origin:left">RN005000024</div></div>
<div class="a" style="left:808px;top:494px;width:190px;height:19px;overflow:hidden"><div class="t" style="left:3px;top:5.27px;font-size:11.5px;color:#000;transform:scaleX(0.8503);transform-origin:left">NEGOTIN  MIRE VINKLAJT 7</div></div>
<div class="a" style="left:0px;top:513px;width:64px;height:19px;overflow:hidden"><div class="t" style="left:3px;top:5.27px;font-size:11.5px;color:#000;transform:scaleX(0.9829);transform-origin:left">30.07.25</div></div>
<div class="a" style="left:64px;top:513px;width:85px;height:19px;overflow:hidden"><div class="t" style="left:3px;top:5.27px;font-size:11.5px;color:#000;transform:scaleX(0.9506);transform-origin:left">KL005-00024</div></div>
<div class="a" style="left:149px;top:513px;width:28px;height:19px;overflow:hidden"><div class="t" style="right:3.5px;top:5.27px;font-size:11.5px;color:#000;transform:scaleX(0.9800);transform-origin:right">1</div></div>
<div class="a" style="left:177px;top:513px;width:24px;height:19px;overflow:hidden"><div class="t" style="left:3px;top:5.27px;font-size:11.5px;color:#000;transform:scaleX(0.8300);transform-origin:left">KL</div></div>
<div class="a" style="left:201px;top:513px;width:42px;height:19px;overflow:hidden"><div class="t" style="right:3.5px;top:5.27px;font-size:11.5px;color:#000;transform:scaleX(0.9800);transform-origin:right">00000</div></div>
<div class="a" style="left:243px;top:513px;width:247px;height:19px;overflow:hidden"><div class="t" style="left:3px;top:5.27px;font-size:11.5px;color:#000;transform:scaleX(0.8300);transform-origin:left">INTERNI</div></div>
<div class="a" style="left:490px;top:513px;width:85px;height:19px;overflow:hidden"><div class="t" style="right:3.5px;top:5.27px;font-size:11.5px;color:#000;transform:scaleX(0.9843);transform-origin:right">-46,00</div></div>
<div class="a" style="left:575px;top:513px;width:85px;height:19px;overflow:hidden"><div class="t" style="right:3.5px;top:5.27px;font-size:11.5px;color:#000;transform:scaleX(0.9829);transform-origin:right">0,00</div></div>
<svg class="a" style="left:664px;top:517px" width="14" height="12"><path d="M1 6.5 L5 10.5 L13.2 1.2" fill="none" stroke="#88A2C8" stroke-width="1.7"/></svg>
<div class="a" style="left:682px;top:513px;width:126px;height:19px;overflow:hidden"><div class="t" style="left:3px;top:5.27px;font-size:11.5px;color:#000;transform:scaleX(0.9606);transform-origin:left">AS od 30.07.2025</div></div>
<div class="a" style="left:0px;top:532px;width:64px;height:19px;overflow:hidden"><div class="t" style="left:3px;top:5.27px;font-size:11.5px;color:#000;transform:scaleX(0.9829);transform-origin:left">31.07.25</div></div>
<div class="a" style="left:64px;top:532px;width:85px;height:19px;overflow:hidden"><div class="t" style="left:3px;top:5.27px;font-size:11.5px;color:#000;transform:scaleX(0.9506);transform-origin:left">KL005-00025</div></div>
<div class="a" style="left:149px;top:532px;width:28px;height:19px;overflow:hidden"><div class="t" style="right:3.5px;top:5.27px;font-size:11.5px;color:#000;transform:scaleX(0.9800);transform-origin:right">1</div></div>
<div class="a" style="left:177px;top:532px;width:24px;height:19px;overflow:hidden"><div class="t" style="left:3px;top:5.27px;font-size:11.5px;color:#000;transform:scaleX(0.8300);transform-origin:left">KL</div></div>
<div class="a" style="left:201px;top:532px;width:42px;height:19px;overflow:hidden"><div class="t" style="right:3.5px;top:5.27px;font-size:11.5px;color:#000;transform:scaleX(0.9800);transform-origin:right">03236</div></div>
<div class="a" style="left:243px;top:532px;width:247px;height:19px;overflow:hidden"><div class="t" style="left:3px;top:5.27px;font-size:11.5px;color:#000;transform:scaleX(0.8394);transform-origin:left">DP PRODUCTS DOO BEOGRAD</div></div>
<div class="a" style="left:490px;top:532px;width:85px;height:19px;overflow:hidden"><div class="t" style="right:3.5px;top:5.27px;font-size:11.5px;color:#000;transform:scaleX(0.9829);transform-origin:right">1.649,00</div></div>
<div class="a" style="left:575px;top:532px;width:85px;height:19px;overflow:hidden"><div class="t" style="right:3.5px;top:5.27px;font-size:11.5px;color:#000;transform:scaleX(0.9829);transform-origin:right">0,00</div></div>
<svg class="a" style="left:664px;top:536px" width="14" height="12"><path d="M1 6.5 L5 10.5 L13.2 1.2" fill="none" stroke="#88A2C8" stroke-width="1.7"/></svg>
<div class="a" style="left:682px;top:532px;width:126px;height:19px;overflow:hidden"><div class="t" style="left:3px;top:5.27px;font-size:11.5px;color:#000;transform:scaleX(0.9264);transform-origin:left">ADADAD od 31.07.2025</div></div>
<div class="a" style="left:808px;top:532px;width:190px;height:19px;overflow:hidden"><div class="t" style="left:3px;top:5.27px;font-size:11.5px;color:#000;transform:scaleX(0.8558);transform-origin:left">BEOGRAD (VRAČAR)  NJEGOŠEVA 19</div></div>
<div class="a" style="left:0px;top:551px;width:64px;height:19px;overflow:hidden"><div class="t" style="left:3px;top:5.27px;font-size:11.5px;color:#000;transform:scaleX(0.9829);transform-origin:left">19.08.25</div></div>
<div class="a" style="left:64px;top:551px;width:85px;height:19px;overflow:hidden"><div class="t" style="left:3px;top:5.27px;font-size:11.5px;color:#000;transform:scaleX(0.9506);transform-origin:left">KL005-00026</div></div>
<div class="a" style="left:149px;top:551px;width:28px;height:19px;overflow:hidden"><div class="t" style="right:3.5px;top:5.27px;font-size:11.5px;color:#000;transform:scaleX(0.9800);transform-origin:right">1</div></div>
<div class="a" style="left:177px;top:551px;width:24px;height:19px;overflow:hidden"><div class="t" style="left:3px;top:5.27px;font-size:11.5px;color:#000;transform:scaleX(0.8300);transform-origin:left">KL</div></div>
<div class="a" style="left:201px;top:551px;width:42px;height:19px;overflow:hidden"><div class="t" style="right:3.5px;top:5.27px;font-size:11.5px;color:#000;transform:scaleX(0.9800);transform-origin:right">03236</div></div>
<div class="a" style="left:243px;top:551px;width:247px;height:19px;overflow:hidden"><div class="t" style="left:3px;top:5.27px;font-size:11.5px;color:#000;transform:scaleX(0.8394);transform-origin:left">DP PRODUCTS DOO BEOGRAD</div></div>
<div class="a" style="left:490px;top:551px;width:85px;height:19px;overflow:hidden"><div class="t" style="right:3.5px;top:5.27px;font-size:11.5px;color:#000;transform:scaleX(0.9829);transform-origin:right">7.200,00</div></div>
<div class="a" style="left:575px;top:551px;width:85px;height:19px;overflow:hidden"><div class="t" style="right:3.5px;top:5.27px;font-size:11.5px;color:#000;transform:scaleX(0.9829);transform-origin:right">0,00</div></div>
<svg class="a" style="left:664px;top:555px" width="14" height="12"><path d="M1 6.5 L5 10.5 L13.2 1.2" fill="none" stroke="#88A2C8" stroke-width="1.7"/></svg>
<div class="a" style="left:682px;top:551px;width:126px;height:19px;overflow:hidden"><div class="t" style="left:3px;top:5.27px;font-size:11.5px;color:#000;transform:scaleX(0.9686);transform-origin:left">25-RN501000003 od 19.08.2025</div></div>
<div class="a" style="left:808px;top:551px;width:190px;height:19px;overflow:hidden"><div class="t" style="left:3px;top:5.27px;font-size:11.5px;color:#000;transform:scaleX(0.8558);transform-origin:left">BEOGRAD (VRAČAR)  NJEGOŠEVA 19</div></div>
<div class="a" style="left:0px;top:570px;width:64px;height:19px;overflow:hidden"><div class="t" style="left:3px;top:5.27px;font-size:11.5px;color:#000;transform:scaleX(0.9829);transform-origin:left">19.08.25</div></div>
<div class="a" style="left:64px;top:570px;width:85px;height:19px;overflow:hidden"><div class="t" style="left:3px;top:5.27px;font-size:11.5px;color:#000;transform:scaleX(0.9452);transform-origin:left">KA005-0819</div></div>
<div class="a" style="left:149px;top:570px;width:28px;height:19px;overflow:hidden"><div class="t" style="right:3.5px;top:5.27px;font-size:11.5px;color:#000;transform:scaleX(0.9800);transform-origin:right">1</div></div>
<div class="a" style="left:177px;top:570px;width:24px;height:19px;overflow:hidden"><div class="t" style="left:3px;top:5.27px;font-size:11.5px;color:#000;transform:scaleX(0.8300);transform-origin:left">KA</div></div>
<div class="a" style="left:201px;top:570px;width:42px;height:19px;overflow:hidden"><div class="t" style="right:3.5px;top:5.27px;font-size:11.5px;color:#000;transform:scaleX(0.9800);transform-origin:right">00000</div></div>
<div class="a" style="left:243px;top:570px;width:247px;height:19px;overflow:hidden"><div class="t" style="left:3px;top:5.27px;font-size:11.5px;color:#000;transform:scaleX(0.8401);transform-origin:left">NIVELACIJA CENA I</div></div>
<div class="a" style="left:490px;top:570px;width:85px;height:19px;overflow:hidden"><div class="t" style="right:3.5px;top:5.27px;font-size:11.5px;color:#000;transform:scaleX(0.9829);transform-origin:right">0,00</div></div>
<div class="a" style="left:575px;top:570px;width:85px;height:19px;overflow:hidden"><div class="t" style="right:3.5px;top:5.27px;font-size:11.5px;color:#000;transform:scaleX(0.9818);transform-origin:right">175,00</div></div>
<svg class="a" style="left:664px;top:574px" width="14" height="12"><path d="M1 6.5 L5 10.5 L13.2 1.2" fill="none" stroke="#88A2C8" stroke-width="1.7"/></svg>
<div class="a" style="left:682px;top:570px;width:126px;height:19px;overflow:hidden"><div class="t" style="left:3px;top:5.27px;font-size:11.5px;color:#000;transform:scaleX(0.9452);transform-origin:left">KA005-0819</div></div>
</div>
<div class="a" style="left:232px;top:170px;width:998px;height:1px;background:#A8A8A8"></div>
<div class="a" style="left:232px;top:189px;width:998px;height:1px;background:#A8A8A8"></div>
<div class="a" style="left:232px;top:208px;width:998px;height:1px;background:#A8A8A8"></div>
<div class="a" style="left:232px;top:227px;width:998px;height:1px;background:#A8A8A8"></div>
<div class="a" style="left:232px;top:246px;width:998px;height:1px;background:#A8A8A8"></div>
<div class="a" style="left:232px;top:265px;width:998px;height:1px;background:#A8A8A8"></div>
<div class="a" style="left:232px;top:284px;width:998px;height:1px;background:#A8A8A8"></div>
<div class="a" style="left:232px;top:303px;width:998px;height:1px;background:#A8A8A8"></div>
<div class="a" style="left:232px;top:322px;width:998px;height:1px;background:#A8A8A8"></div>
<div class="a" style="left:232px;top:341px;width:998px;height:1px;background:#A8A8A8"></div>
<div class="a" style="left:232px;top:360px;width:998px;height:1px;background:#A8A8A8"></div>
<div class="a" style="left:232px;top:379px;width:998px;height:1px;background:#A8A8A8"></div>
<div class="a" style="left:232px;top:398px;width:998px;height:1px;background:#A8A8A8"></div>
<div class="a" style="left:232px;top:417px;width:998px;height:1px;background:#A8A8A8"></div>
<div class="a" style="left:232px;top:436px;width:998px;height:1px;background:#A8A8A8"></div>
<div class="a" style="left:232px;top:455px;width:998px;height:1px;background:#A8A8A8"></div>
<div class="a" style="left:232px;top:474px;width:998px;height:1px;background:#A8A8A8"></div>
<div class="a" style="left:232px;top:493px;width:998px;height:1px;background:#A8A8A8"></div>
<div class="a" style="left:232px;top:512px;width:998px;height:1px;background:#A8A8A8"></div>
<div class="a" style="left:232px;top:531px;width:998px;height:1px;background:#A8A8A8"></div>
<div class="a" style="left:232px;top:550px;width:998px;height:1px;background:#A8A8A8"></div>
<div class="a" style="left:232px;top:569px;width:998px;height:1px;background:#A8A8A8"></div>
<div class="a" style="left:232px;top:588px;width:998px;height:1px;background:#A8A8A8"></div>
<div class="a" style="left:232px;top:607px;width:998px;height:1px;background:#A8A8A8"></div>
<div class="a" style="left:232px;top:626px;width:998px;height:1px;background:#A8A8A8"></div>
<div class="a" style="left:232px;top:645px;width:998px;height:1px;background:#A8A8A8"></div>
<div class="a" style="left:232px;top:664px;width:998px;height:1px;background:#A8A8A8"></div>
<div class="a" style="left:232px;top:683px;width:998px;height:1px;background:#A8A8A8"></div>
<div class="a" style="left:232px;top:702px;width:998px;height:1px;background:#A8A8A8"></div>
<div class="a" style="left:232px;top:721px;width:998px;height:1px;background:#A8A8A8"></div>
<div class="a" style="left:232px;top:740px;width:998px;height:1px;background:#A8A8A8"></div>
<div class="a" style="left:232px;top:759px;width:998px;height:1px;background:#A8A8A8"></div>
<div class="a" style="left:296px;top:150px;width:1px;height:609px;background:#A8A8A8"></div>
<div class="a" style="left:381px;top:150px;width:1px;height:609px;background:#A8A8A8"></div>
<div class="a" style="left:409px;top:150px;width:1px;height:609px;background:#A8A8A8"></div>
<div class="a" style="left:433px;top:150px;width:1px;height:609px;background:#A8A8A8"></div>
<div class="a" style="left:475px;top:150px;width:1px;height:609px;background:#A8A8A8"></div>
<div class="a" style="left:722px;top:150px;width:1px;height:609px;background:#A8A8A8"></div>
<div class="a" style="left:807px;top:150px;width:1px;height:609px;background:#A8A8A8"></div>
<div class="a" style="left:892px;top:150px;width:1px;height:609px;background:#A8A8A8"></div>
<div class="a" style="left:914px;top:150px;width:1px;height:609px;background:#A8A8A8"></div>
<div class="a" style="left:1040px;top:150px;width:1px;height:609px;background:#A8A8A8"></div>
<div class="a" style="left:1230px;top:149px;width:1px;height:610px;background:#D0D0D0"></div>
<div class="a" style="left:232px;top:760px;width:998px;height:26px;background:#F5F5F5"></div>
<div class="a" style="left:723.5px;top:764px;width:83px;height:19.5px;background:#FAFAFA;border:1px solid #E2E2E2;border-radius:3px"></div>
<div class="a" style="left:808.5px;top:764px;width:83px;height:19.5px;background:#FAFAFA;border:1px solid #E2E2E2;border-radius:3px"></div>
<div class="a" style="left:724px;top:764px;width:82px;height:19px;overflow:hidden">
<div class="t" style="left:4px;top:4.77px;font-size:11.5px;color:#1A1F8F;transform:scaleX(0.99);transform-origin:left">-17.970.427,78</div>
</div>
<div class="t" style="top:768.77px;font-size:11.5px;color:#1A1F8F;right:571px;">77.655,96</div>
<div class="a" style="left:1231px;top:149px;width:17px;height:637px;background:#F3F3F3"></div>
<svg class="a" style="left:1235px;top:155px;" width="8" height="7" viewBox="0 0 8 7"><path d="M0 6.5 L4 0 L8 6.5Z" fill="#A0A0A0"/></svg>
<div class="a" style="left:1235.5px;top:237px;width:6.5px;height:531px;background:#A0A0A0;border-radius:3px"></div>
<svg class="a" style="left:1235px;top:774px;" width="8" height="7" viewBox="0 0 8 7"><path d="M0 0 L4 6.5 L8 0Z" fill="#A0A0A0"/></svg>
<div class="a" style="left:232px;top:786px;width:1016px;height:18px;background:#FAFAFA"></div>
<svg class="a" style="left:632px;top:788px;" width="14" height="13" viewBox="0 0 14 13"><path d="M0.6 0.6 H13.4 L8.2 6.5 V12.4 H5.8 V6.5Z" fill="none" stroke="#555" stroke-width="1.1"/></svg>
<div class="a" style="left:660px;top:786px;width:570px;height:18px;background:#F3F3F3"></div>
<svg class="a" style="left:665px;top:790px;" width="7" height="8" viewBox="0 0 7 8"><path d="M6.5 0 L0 4 L6.5 8Z" fill="#A0A0A0"/></svg>
<div class="a" style="left:677px;top:790px;width:416px;height:9px;background:#A0A0A0;border-radius:4.5px"></div>
<svg class="a" style="left:1219px;top:790px;" width="7" height="8" viewBox="0 0 7 8"><path d="M0 0 L6.5 4 L0 8Z" fill="#A0A0A0"/></svg>
<div class="a" style="left:1248px;top:122px;width:2px;height:714px;background:#C8C8C8"></div>
<div class="a" style="left:232px;top:804px;width:1016px;height:32px;background:#F3F3F3"></div>
<div class="a" style="left:235.5px;top:811px;width:16px;height:16px;background:#FAFAFA;border:1px solid #D4D4D4;border-radius:4px"></div>
<div class="t" style="top:813.84px;font-size:12px;color:#0A0A0A;left:256px;transform:scaleX(0.9571);transform-origin:left;">F2 - IZMENE</div>
<div class="a" style="left:334px;top:807px;width:1px;height:25px;background:#D4D4D4"></div>
<div class="a" style="left:338px;top:807px;width:33px;height:25px;background:#fff;border:2px solid #2B579A;border-radius:5px"></div>
<div class="a" style="left:345.2px;top:811.5px;width:5px;height:3.5px;background:#B8B8B8;border-radius:0.8px"></div>
<div class="a" style="left:351.59999999999997px;top:811.5px;width:5px;height:3.5px;background:#FFA800;border-radius:0.8px"></div>
<div class="a" style="left:358.0px;top:811.5px;width:5px;height:3.5px;background:#B8B8B8;border-radius:0.8px"></div>
<div class="a" style="left:345.2px;top:816.5px;width:5px;height:3.5px;background:#D21414;border-radius:0.8px"></div>
<div class="a" style="left:351.59999999999997px;top:816.5px;width:5px;height:3.5px;background:#B8B8B8;border-radius:0.8px"></div>
<div class="a" style="left:358.0px;top:816.5px;width:5px;height:3.5px;background:#B8B8B8;border-radius:0.8px"></div>
<div class="a" style="left:345.2px;top:821.5px;width:5px;height:3.5px;background:#B8B8B8;border-radius:0.8px"></div>
<div class="a" style="left:351.59999999999997px;top:821.5px;width:5px;height:3.5px;background:#B8B8B8;border-radius:0.8px"></div>
<div class="a" style="left:358.0px;top:821.5px;width:5px;height:3.5px;background:#0A9A28;border-radius:0.8px"></div>
<div class="a" style="left:372px;top:807px;width:1px;height:25px;background:#D4D4D4"></div>
<div class="a" style="left:376px;top:811px;width:16px;height:16px;background:#FAFAFA;border:1px solid #D4D4D4;border-radius:4px"></div>
<div class="t" style="top:813.84px;font-size:12px;color:#0A0A0A;left:397px;transform:scaleX(0.9040);transform-origin:left;">Prikaži salda</div>
<div class="a" style="left:466px;top:810px;width:1px;height:20px;background:#D8D8D8"></div>
<div class="t" style="top:813.84px;font-size:12px;color:#0A0A0A;left:472px;transform:scaleX(1.0098);transform-origin:left;">Period štampe:</div>
<div class="a" style="left:561px;top:808.5px;width:76.5px;height:22px;background:#FAFAFA;border:1px solid #E0E0E0;border-bottom:1px solid #BDBDBD;border-radius:4px"></div>
<div class="t" style="top:814.27px;font-size:11.5px;color:#0A0A0A;left:564px;transform:scaleX(0.9829);transform-origin:left;">01.01.25</div>
<svg class="a" style="left:621px;top:816.75px;" width="10" height="6.5" viewBox="0 0 10 6.5"><path d="M1 1 L5.0 5.5 L9 1" fill="none" stroke="#333" stroke-width="1.2"/></svg>
<div class="a" style="left:645px;top:808.5px;width:76.5px;height:22px;background:#FAFAFA;border:1px solid #E0E0E0;border-bottom:1px solid #BDBDBD;border-radius:4px"></div>
<div class="t" style="top:814.27px;font-size:11.5px;color:#0A0A0A;left:648px;transform:scaleX(0.9829);transform-origin:left;">31.08.25</div>
<svg class="a" style="left:705px;top:816.75px;" width="10" height="6.5" viewBox="0 0 10 6.5"><path d="M1 1 L5.0 5.5 L9 1" fill="none" stroke="#333" stroke-width="1.2"/></svg>
<div class="t" style="top:813.84px;font-size:12px;color:#0A0A0A;left:728px;transform:scaleX(1.0210);transform-origin:left;">Strana:</div>
<div class="a" style="left:773.5px;top:808.5px;width:38px;height:22px;background:#FAFAFA;border:1px solid #E0E0E0;border-bottom:1px solid #BDBDBD;border-radius:4px"></div>
<div class="t" style="top:814.27px;font-size:11.5px;color:#0A0A0A;left:779px;">1</div>
<div class="a" style="left:818px;top:811px;width:16px;height:16px;background:#FAFAFA;border:1px solid #D4D4D4;border-radius:4px"></div>
<div class="t" style="top:813.84px;font-size:12px;color:#0A0A0A;left:840px;transform:scaleX(1.0091);transform-origin:left;">Osn.brnal</div>
<div class="t" style="top:813.84px;font-size:12px;color:#0A0A0A;left:893px;transform:scaleX(1.0166);transform-origin:left;">Red.broj:</div>
<div class="a" style="left:946px;top:808.5px;width:46px;height:22px;background:#FAFAFA;border:1px solid #E0E0E0;border-bottom:1px solid #BDBDBD;border-radius:4px"></div>
<div class="t" style="top:814.27px;font-size:11.5px;color:#0A0A0A;left:951px;">1</div>
<div class="a" style="left:998px;top:810px;width:1px;height:20px;background:#D8D8D8"></div>
<div class="a" style="left:1003px;top:807.5px;width:66px;height:24px;background:#FFFFFF;border:1px solid #DADADA;border-radius:4px"></div>
<div class="t" style="top:813.84px;font-size:12px;color:#0A0A0A;left:1011px;transform:scaleX(1.0904);transform-origin:left;">Štampaj</div>
<div class="a" style="left:1011px;top:826px;width:8px;height:1px;background:#1B1B1B"></div>
<div class="a" style="left:1071px;top:810px;width:1px;height:20px;background:#D8D8D8"></div>
<div class="a" style="left:1246px;top:810px;width:1px;height:20px;background:#D8D8D8"></div>
<div class="a" style="left:1250px;top:96px;width:207px;height:27px;background:#F3F3F3"></div>
<div class="a" style="left:1250px;top:96px;width:47px;height:27px;background:#F3F3F3;border:1px solid #DADADA;border-bottom:none;border-radius:5px 5px 0 0"></div>
<div class="a" style="left:1254.5px;top:97px;width:38.5px;height:3px;background:#2B579A"></div>
<div class="t" style="top:104.84px;font-size:12px;color:#0A0A0A;left:1257px;transform:scaleX(0.9514);transform-origin:left;">Planer</div>
<div class="a" style="left:1298px;top:97px;width:47px;height:26px;background:#F3F3F3;border:1px solid #DADADA;border-bottom:none;border-radius:5px 5px 0 0"></div>
<div class="t" style="top:104.84px;font-size:12px;color:#0A0A0A;left:1304px;transform:scaleX(0.9162);transform-origin:left;">Zadaci</div>
<div class="a" style="left:1345.5px;top:97px;width:68px;height:26px;background:#F3F3F3;border:1px solid #DADADA;border-bottom:none;border-radius:5px 5px 0 0"></div>
<div class="t" style="top:104.84px;font-size:12px;color:#0A0A0A;left:1352px;transform:scaleX(0.9878);transform-origin:left;">Za štampu</div>
<svg class="a" style="left:1422px;top:101px;" width="7" height="12" viewBox="0 0 7 12"><path d="M6 0.8 L1 6 L6 11.2" fill="none" stroke="#BDBDBD" stroke-width="1.1"/></svg>
<svg class="a" style="left:1444px;top:101px;" width="7" height="12" viewBox="0 0 7 12"><path d="M1 0.8 L6 6 L1 11.2" fill="none" stroke="#222" stroke-width="1.3"/></svg>
<div class="a" style="left:1250px;top:122px;width:207px;height:714px;background:#F3F3F3;border-top:1px solid #DADADA"></div>
<div class="a" style="left:1250px;top:123px;width:30px;height:713px;background:#FFFFFF"></div>
<div class="a" style="left:1280px;top:123px;width:160px;height:29px;background:#F3F3F3"></div>
<div class="t" style="top:132.84px;font-size:12px;color:#0A0A0A;font-weight:bold;left:1287px;">NEDELJA, 31. AVGUST</div>
<div class="a" style="left:1280px;top:152px;width:160px;height:684px;background:#DCDCDC"></div>
<div class="a" style="left:1280px;top:152px;width:1px;height:684px;background:#B8B8B8"></div>
<div class="a" style="left:1257px;top:152px;width:183px;height:1px;background:#ABABAB"></div>
<div class="a" style="left:1283px;top:174px;width:157px;height:1px;background:repeating-linear-gradient(to right,#B4B4B4 0 1px,transparent 1px 3px)"></div>
<div class="t" style="top:157.42px;font-size:12.5px;color:#0A0A0A;left:1258px;transform:scaleX(0.9494);transform-origin:left;">04</div>
<div class="a" style="left:1257px;top:196px;width:183px;height:1px;background:#ABABAB"></div>
<div class="a" style="left:1283px;top:218px;width:157px;height:1px;background:repeating-linear-gradient(to right,#B4B4B4 0 1px,transparent 1px 3px)"></div>
<div class="t" style="top:201.42px;font-size:12.5px;color:#0A0A0A;left:1258px;transform:scaleX(0.9494);transform-origin:left;">05</div>
<div class="a" style="left:1257px;top:240px;width:183px;height:1px;background:#ABABAB"></div>
<div class="a" style="left:1283px;top:262px;width:157px;height:1px;background:repeating-linear-gradient(to right,#B4B4B4 0 1px,transparent 1px 3px)"></div>
<div class="t" style="top:245.42px;font-size:12.5px;color:#0A0A0A;left:1258px;transform:scaleX(0.9494);transform-origin:left;">06</div>
<div class="a" style="left:1257px;top:284px;width:183px;height:1px;background:#ABABAB"></div>
<div class="a" style="left:1283px;top:306px;width:157px;height:1px;background:repeating-linear-gradient(to right,#B4B4B4 0 1px,transparent 1px 3px)"></div>
<div class="t" style="top:289.42px;font-size:12.5px;color:#0A0A0A;left:1258px;transform:scaleX(0.9494);transform-origin:left;">07</div>
<div class="a" style="left:1257px;top:328px;width:183px;height:1px;background:#ABABAB"></div>
<div class="a" style="left:1283px;top:350px;width:157px;height:1px;background:repeating-linear-gradient(to right,#B4B4B4 0 1px,transparent 1px 3px)"></div>
<div class="t" style="top:333.42px;font-size:12.5px;color:#0A0A0A;left:1258px;transform:scaleX(0.9494);transform-origin:left;">08</div>
<div class="a" style="left:1257px;top:372px;width:183px;height:1px;background:#ABABAB"></div>
<div class="a" style="left:1283px;top:394px;width:157px;height:1px;background:repeating-linear-gradient(to right,#B4B4B4 0 1px,transparent 1px 3px)"></div>
<div class="t" style="top:377.42px;font-size:12.5px;color:#0A0A0A;left:1258px;transform:scaleX(0.9494);transform-origin:left;">09</div>
<div class="a" style="left:1257px;top:416px;width:183px;height:1px;background:#ABABAB"></div>
<div class="a" style="left:1283px;top:438px;width:157px;height:1px;background:repeating-linear-gradient(to right,#B4B4B4 0 1px,transparent 1px 3px)"></div>
<div class="t" style="top:421.42px;font-size:12.5px;color:#0A0A0A;left:1258px;transform:scaleX(0.9494);transform-origin:left;">10</div>
<div class="a" style="left:1257px;top:460px;width:183px;height:1px;background:#ABABAB"></div>
<div class="a" style="left:1283px;top:482px;width:157px;height:1px;background:repeating-linear-gradient(to right,#B4B4B4 0 1px,transparent 1px 3px)"></div>
<div class="t" style="top:465.42px;font-size:12.5px;color:#0A0A0A;left:1258px;transform:scaleX(0.9494);transform-origin:left;">11</div>
<div class="a" style="left:1257px;top:504px;width:183px;height:1px;background:#ABABAB"></div>
<div class="a" style="left:1283px;top:526px;width:157px;height:1px;background:repeating-linear-gradient(to right,#B4B4B4 0 1px,transparent 1px 3px)"></div>
<div class="t" style="top:509.42px;font-size:12.5px;color:#0A0A0A;left:1258px;transform:scaleX(0.9494);transform-origin:left;">12</div>
<div class="a" style="left:1257px;top:548px;width:183px;height:1px;background:#ABABAB"></div>
<div class="a" style="left:1283px;top:570px;width:157px;height:1px;background:repeating-linear-gradient(to right,#B4B4B4 0 1px,transparent 1px 3px)"></div>
<div class="t" style="top:553.42px;font-size:12.5px;color:#0A0A0A;left:1258px;transform:scaleX(0.9494);transform-origin:left;">13</div>
<div class="a" style="left:1257px;top:592px;width:183px;height:1px;background:#ABABAB"></div>
<div class="a" style="left:1283px;top:614px;width:157px;height:1px;background:repeating-linear-gradient(to right,#B4B4B4 0 1px,transparent 1px 3px)"></div>
<div class="t" style="top:597.42px;font-size:12.5px;color:#0A0A0A;left:1258px;transform:scaleX(0.9494);transform-origin:left;">14</div>
<div class="a" style="left:1257px;top:636px;width:183px;height:1px;background:#ABABAB"></div>
<div class="a" style="left:1283px;top:658px;width:157px;height:1px;background:repeating-linear-gradient(to right,#B4B4B4 0 1px,transparent 1px 3px)"></div>
<div class="t" style="top:641.42px;font-size:12.5px;color:#0A0A0A;left:1258px;transform:scaleX(0.9494);transform-origin:left;">15</div>
<div class="a" style="left:1257px;top:680px;width:183px;height:1px;background:#ABABAB"></div>
<div class="a" style="left:1283px;top:702px;width:157px;height:1px;background:repeating-linear-gradient(to right,#B4B4B4 0 1px,transparent 1px 3px)"></div>
<div class="t" style="top:685.42px;font-size:12.5px;color:#0A0A0A;left:1258px;transform:scaleX(0.9494);transform-origin:left;">16</div>
<div class="a" style="left:1257px;top:724px;width:183px;height:1px;background:#ABABAB"></div>
<div class="a" style="left:1283px;top:746px;width:157px;height:1px;background:repeating-linear-gradient(to right,#B4B4B4 0 1px,transparent 1px 3px)"></div>
<div class="t" style="top:729.42px;font-size:12.5px;color:#0A0A0A;left:1258px;transform:scaleX(0.9494);transform-origin:left;">17</div>
<div class="a" style="left:1257px;top:768px;width:183px;height:1px;background:#ABABAB"></div>
<div class="a" style="left:1283px;top:790px;width:157px;height:1px;background:repeating-linear-gradient(to right,#B4B4B4 0 1px,transparent 1px 3px)"></div>
<div class="t" style="top:773.42px;font-size:12.5px;color:#0A0A0A;left:1258px;transform:scaleX(0.9494);transform-origin:left;">18</div>
<div class="a" style="left:1257px;top:812px;width:183px;height:1px;background:#ABABAB"></div>
<div class="a" style="left:1283px;top:834px;width:157px;height:1px;background:repeating-linear-gradient(to right,#B4B4B4 0 1px,transparent 1px 3px)"></div>
<div class="t" style="top:817.42px;font-size:12.5px;color:#0A0A0A;left:1258px;transform:scaleX(0.9494);transform-origin:left;">19</div>
<div class="a" style="left:1250px;top:835px;width:190px;height:1px;background:#FFFFFF"></div>
<div class="a" style="left:1283px;top:834px;width:157px;height:1px;background:repeating-linear-gradient(to right,#B4B4B4 0 1px,transparent 1px 3px)"></div>
<div class="a" style="left:1440px;top:123px;width:17px;height:713px;background:#F3F3F3"></div>
<svg class="a" style="left:1445px;top:128px;" width="8" height="7" viewBox="0 0 8 7"><path d="M0 6.5 L4 0 L8 6.5Z" fill="#A0A0A0"/></svg>
<div class="a" style="left:1445px;top:253px;width:7px;height:437px;background:#9A9A9A;border-radius:3.5px"></div>
<svg class="a" style="left:1445px;top:823px;" width="8" height="7" viewBox="0 0 8 7"><path d="M0 0 L4 6.5 L8 0Z" fill="#A0A0A0"/></svg>
<div class="a" style="left:1280px;top:397px;width:25px;height:163px;background:#F3F3F3;border-radius:0 5px 5px 0;box-shadow:1px 0 1px rgba(0,0,0,0.06)"></div>
<svg class="a" style="left:1290.5px;top:412px;" width="7" height="7" viewBox="0 0 7 7"><path d="M6.5 0 L0 3.5 L6.5 7Z" fill="#151515"/></svg>
<div class="t" style="left:1294.5px;top:488px;font-size:12px;color:#1B1B1B;transform:translate(-50%,-50%) rotate(-90deg) scaleX(0.8726);transform-origin:center">Prethodni zadaci</div>
<div class="a" style="left:1415px;top:397px;width:25px;height:163px;background:#F3F3F3;border-radius:5px 0 0 5px"></div>
<svg class="a" style="left:1424px;top:412px;" width="7" height="7" viewBox="0 0 7 7"><path d="M0 0 L6.5 3.5 L0 7Z" fill="#151515"/></svg>
<div class="t" style="left:1427.5px;top:487.3px;font-size:12px;color:#B0B0B0;transform:translate(-50%,-50%) rotate(-90deg) scaleX(0.8486);transform-origin:center">Budući zadaci</div>
<div class="a" style="left:0px;top:836px;width:1459px;height:28px;background:#2B579A"></div>
<div class="a" style="left:0px;top:836px;width:1459px;height:1.5px;background:#244D8C"></div>
<div class="t" style="top:844.42px;font-size:12.5px;color:#FFFFFF;left:1228px;transform:scaleX(0.9391);transform-origin:left;">T R X</div>
<div class="a" style="left:1278px;top:838px;width:1px;height:25px;background:#24497F"></div>
<div class="a" style="left:1305px;top:838px;width:1px;height:25px;background:#24497F"></div>
<div class="a" style="left:1342px;top:838px;width:1px;height:25px;background:#24497F"></div>
<div class="a" style="left:1376px;top:838px;width:1px;height:25px;background:#24497F"></div>
<div class="a" style="left:1410px;top:838px;width:1px;height:25px;background:#24497F"></div>
<div class="a" style="left:1441px;top:838px;width:1px;height:25px;background:#24497F"></div>
<svg class="a" style="left:1282px;top:841px;" width="19" height="18" viewBox="0 0 19 18"><path d="M2.5 1 H16.5 Q18 1 18 2.5 V11 Q18 12.5 16.5 12.5 H10 L7 17 V12.5 H2.5 Q1 12.5 1 11 V2.5 Q1 1 2.5 1Z" fill="none" stroke="#fff" stroke-width="1.3"/><circle cx="7" cy="5.5" r="1.1" fill="#fff"/><circle cx="12" cy="5.5" r="1.1" fill="#fff"/><path d="M6 8 Q9.5 11 13 8" fill="none" stroke="#fff" stroke-width="1.2"/></svg>
<div class="t" style="top:844.84px;font-size:12px;color:#A4AEC8;left:1310px;transform:scaleX(0.8569);transform-origin:left;">CAPS</div>
<div class="t" style="top:844.84px;font-size:12px;color:#0B0F2E;left:1346px;transform:scaleX(0.8965);transform-origin:left;">NUM</div>
<div class="t" style="top:844.84px;font-size:12px;color:#A4AEC8;left:1379px;transform:scaleX(0.8435);transform-origin:left;">SCRL</div>
<div class="t" style="top:844.84px;font-size:12px;color:#A4AEC8;left:1416px;transform:scaleX(0.9248);transform-origin:left;">INS</div>
<div class="a" style="left:1455px;top:852px;width:2px;height:2px;background:#fff"></div>
<div class="a" style="left:1451px;top:856px;width:2px;height:2px;background:#fff"></div>
<div class="a" style="left:1455px;top:856px;width:2px;height:2px;background:#fff"></div>
<div class="a" style="left:1447px;top:860px;width:2px;height:2px;background:#fff"></div>
<div class="a" style="left:1451px;top:860px;width:2px;height:2px;background:#fff"></div>
<div class="a" style="left:1455px;top:860px;width:2px;height:2px;background:#fff"></div>
<div class="a" style="left:93px;top:433px;width:523px;height:363px;background:#FAFAFA;border:1px solid #D0D0D0;border-radius:3px;box-shadow:0 1px 3px rgba(0,0,0,0.10);overflow:hidden">
<div class="a" style="left:0;top:0;width:503px;height:21px;background:#E9E9E9;border-bottom:1px solid #A8A8A8"></div>
<div class="t" style="left:3px;top:5.34px;font-size:12px;color:#0A0A0A">Prečica</div>
<div class="t" style="left:71px;top:5.34px;font-size:12px;color:#0A0A0A">Opis</div>
<div class="t" style="left:400px;top:5.34px;font-size:12px;color:#0A0A0A">Opseg važenja</div>
<svg class="a" style="left:5px;top:27px" width="6" height="10"><path d="M3 1.5 V10 M0.6 4 L3 1 L5.4 4" fill="none" stroke="#222" stroke-width="1.1"/></svg>
<div class="a" style="left:68px;top:21px;width:329px;height:19px;overflow:hidden"><div class="t" style="left:3px;top:4.27px;font-size:11.5px;color:#000;transform:scaleX(0.95);transform-origin:left">Pomeranje fokusa u prethodni red</div></div>
<div class="a" style="left:397px;top:21px;width:106px;height:19px;overflow:hidden"><div class="t" style="left:3px;top:4.27px;font-size:11.5px;color:#000;transform:scaleX(0.95);transform-origin:left">Aktivna tabela</div></div>
<div class="a" style="left:0;top:39px;width:504px;height:1px;background:#A8A8A8"></div>
<svg class="a" style="left:5px;top:46px" width="6" height="10"><path d="M3 0 V8.5 M0.6 6 L3 9 L5.4 6" fill="none" stroke="#222" stroke-width="1.1"/></svg>
<div class="a" style="left:68px;top:40px;width:329px;height:19px;overflow:hidden"><div class="t" style="left:3px;top:4.27px;font-size:11.5px;color:#000;transform:scaleX(0.95);transform-origin:left">Pomeranje fokusa u sledeći red</div></div>
<div class="a" style="left:397px;top:40px;width:106px;height:19px;overflow:hidden"><div class="t" style="left:3px;top:4.27px;font-size:11.5px;color:#000;transform:scaleX(0.95);transform-origin:left">Aktivna tabela</div></div>
<div class="a" style="left:0;top:58px;width:504px;height:1px;background:#A8A8A8"></div>
<div class="a" style="left:0px;top:59px;width:68px;height:19px;overflow:hidden"><div class="t" style="left:3px;top:4.27px;font-size:11.5px;color:#000;transform:scaleX(0.95);transform-origin:left">PageUp</div></div>
<div class="a" style="left:68px;top:59px;width:329px;height:19px;overflow:hidden"><div class="t" style="left:3px;top:4.27px;font-size:11.5px;color:#000;transform:scaleX(0.95);transform-origin:left">Cela stranica na gore</div></div>
<div class="a" style="left:397px;top:59px;width:106px;height:19px;overflow:hidden"><div class="t" style="left:3px;top:4.27px;font-size:11.5px;color:#000;transform:scaleX(0.95);transform-origin:left">Aktivna tabela</div></div>
<div class="a" style="left:0;top:77px;width:504px;height:1px;background:#A8A8A8"></div>
<div class="a" style="left:0px;top:78px;width:68px;height:19px;overflow:hidden"><div class="t" style="left:3px;top:4.27px;font-size:11.5px;color:#000;transform:scaleX(0.95);transform-origin:left">PageDown</div></div>
<div class="a" style="left:68px;top:78px;width:329px;height:19px;overflow:hidden"><div class="t" style="left:3px;top:4.27px;font-size:11.5px;color:#000;transform:scaleX(0.95);transform-origin:left">Cela stranica na dole</div></div>
<div class="a" style="left:397px;top:78px;width:106px;height:19px;overflow:hidden"><div class="t" style="left:3px;top:4.27px;font-size:11.5px;color:#000;transform:scaleX(0.95);transform-origin:left">Aktivna tabela</div></div>
<div class="a" style="left:0;top:96px;width:504px;height:1px;background:#A8A8A8"></div>
<svg class="a" style="left:30px;top:103px" width="6" height="10"><path d="M3 1.5 V10 M0.6 4 L3 1 L5.4 4" fill="none" stroke="#222" stroke-width="1.1"/></svg>
<div class="a" style="left:0px;top:97px;width:68px;height:19px;overflow:hidden"><div class="t" style="left:3px;top:4.27px;font-size:11.5px;color:#000;transform:scaleX(0.95);transform-origin:left">Alt + </div></div>
<div class="a" style="left:68px;top:97px;width:329px;height:19px;overflow:hidden"><div class="t" style="left:3px;top:4.27px;font-size:11.5px;color:#000;transform:scaleX(0.95);transform-origin:left">Isti fokus - prethodni red</div></div>
<div class="a" style="left:397px;top:97px;width:106px;height:19px;overflow:hidden"><div class="t" style="left:3px;top:4.27px;font-size:11.5px;color:#000;transform:scaleX(0.95);transform-origin:left">Aktivna tabela</div></div>
<div class="a" style="left:0;top:115px;width:504px;height:1px;background:#A8A8A8"></div>
<svg class="a" style="left:30px;top:122px" width="6" height="10"><path d="M3 0 V8.5 M0.6 6 L3 9 L5.4 6" fill="none" stroke="#222" stroke-width="1.1"/></svg>
<div class="a" style="left:0px;top:116px;width:68px;height:19px;overflow:hidden"><div class="t" style="left:3px;top:4.27px;font-size:11.5px;color:#000;transform:scaleX(0.95);transform-origin:left">Alt + </div></div>
<div class="a" style="left:68px;top:116px;width:329px;height:19px;overflow:hidden"><div class="t" style="left:3px;top:4.27px;font-size:11.5px;color:#000;transform:scaleX(0.95);transform-origin:left">Isti fokus - sledeći red</div></div>
<div class="a" style="left:397px;top:116px;width:106px;height:19px;overflow:hidden"><div class="t" style="left:3px;top:4.27px;font-size:11.5px;color:#000;transform:scaleX(0.95);transform-origin:left">Aktivna tabela</div></div>
<div class="a" style="left:0;top:134px;width:504px;height:1px;background:#A8A8A8"></div>
<div class="a" style="left:0px;top:135px;width:68px;height:19px;overflow:hidden"><div class="t" style="left:3px;top:4.27px;font-size:11.5px;color:#000;transform:scaleX(0.95);transform-origin:left">Alt + PageUp</div></div>
<div class="a" style="left:68px;top:135px;width:329px;height:19px;overflow:hidden"><div class="t" style="left:3px;top:4.27px;font-size:11.5px;color:#000;transform:scaleX(0.95);transform-origin:left">Isti fokus - cela stranica na gore</div></div>
<div class="a" style="left:397px;top:135px;width:106px;height:19px;overflow:hidden"><div class="t" style="left:3px;top:4.27px;font-size:11.5px;color:#000;transform:scaleX(0.95);transform-origin:left">Aktivna tabela</div></div>
<div class="a" style="left:0;top:153px;width:504px;height:1px;background:#A8A8A8"></div>
<div class="a" style="left:0px;top:154px;width:68px;height:19px;overflow:hidden"><div class="t" style="left:3px;top:4.27px;font-size:11.5px;color:#000;transform:scaleX(0.95);transform-origin:left">Alt + PageDown</div></div>
<div class="a" style="left:68px;top:154px;width:329px;height:19px;overflow:hidden"><div class="t" style="left:3px;top:4.27px;font-size:11.5px;color:#000;transform:scaleX(0.95);transform-origin:left">Isti fokus - cela stranica na dole</div></div>
<div class="a" style="left:397px;top:154px;width:106px;height:19px;overflow:hidden"><div class="t" style="left:3px;top:4.27px;font-size:11.5px;color:#000;transform:scaleX(0.95);transform-origin:left">Aktivna tabela</div></div>
<div class="a" style="left:0;top:172px;width:504px;height:1px;background:#A8A8A8"></div>
<div class="a" style="left:0px;top:173px;width:68px;height:19px;overflow:hidden"><div class="t" style="left:3px;top:4.27px;font-size:11.5px;color:#000;transform:scaleX(0.95);transform-origin:left">Ctrl + Home</div></div>
<div class="a" style="left:68px;top:173px;width:329px;height:19px;overflow:hidden"><div class="t" style="left:3px;top:4.27px;font-size:11.5px;color:#000;transform:scaleX(0.95);transform-origin:left">Početak tabele</div></div>
<div class="a" style="left:397px;top:173px;width:106px;height:19px;overflow:hidden"><div class="t" style="left:3px;top:4.27px;font-size:11.5px;color:#000;transform:scaleX(0.95);transform-origin:left">Aktivna tabela</div></div>
<div class="a" style="left:0;top:191px;width:504px;height:1px;background:#A8A8A8"></div>
<div class="a" style="left:0px;top:192px;width:68px;height:19px;overflow:hidden"><div class="t" style="left:3px;top:4.27px;font-size:11.5px;color:#000;transform:scaleX(0.95);transform-origin:left">Ctrl + End</div></div>
<div class="a" style="left:68px;top:192px;width:329px;height:19px;overflow:hidden"><div class="t" style="left:3px;top:4.27px;font-size:11.5px;color:#000;transform:scaleX(0.95);transform-origin:left">Kraj tabele</div></div>
<div class="a" style="left:397px;top:192px;width:106px;height:19px;overflow:hidden"><div class="t" style="left:3px;top:4.27px;font-size:11.5px;color:#000;transform:scaleX(0.95);transform-origin:left">Aktivna tabela</div></div>
<div class="a" style="left:0;top:210px;width:504px;height:1px;background:#A8A8A8"></div>
<div class="a" style="left:0px;top:211px;width:68px;height:19px;overflow:hidden"><div class="t" style="left:3px;top:4.27px;font-size:11.5px;color:#000;transform:scaleX(0.95);transform-origin:left">Enter</div></div>
<div class="a" style="left:68px;top:211px;width:329px;height:19px;overflow:hidden"><div class="t" style="left:3px;top:4.27px;font-size:11.5px;color:#000;transform:scaleX(0.95);transform-origin:left">Prelazak u narednu ćeliju</div></div>
<div class="a" style="left:397px;top:211px;width:106px;height:19px;overflow:hidden"><div class="t" style="left:3px;top:4.27px;font-size:11.5px;color:#000;transform:scaleX(0.95);transform-origin:left">Aktivna tabela</div></div>
<div class="a" style="left:0;top:229px;width:504px;height:1px;background:#A8A8A8"></div>
<div class="a" style="left:0px;top:230px;width:68px;height:19px;overflow:hidden"><div class="t" style="left:3px;top:4.27px;font-size:11.5px;color:#000;transform:scaleX(0.95);transform-origin:left">Shift + Enter</div></div>
<div class="a" style="left:68px;top:230px;width:329px;height:19px;overflow:hidden"><div class="t" style="left:3px;top:4.27px;font-size:11.5px;color:#000;transform:scaleX(0.95);transform-origin:left">Povratak na prethodnu ćeliju</div></div>
<div class="a" style="left:397px;top:230px;width:106px;height:19px;overflow:hidden"><div class="t" style="left:3px;top:4.27px;font-size:11.5px;color:#000;transform:scaleX(0.95);transform-origin:left">Aktivna tabela</div></div>
<div class="a" style="left:0;top:248px;width:504px;height:1px;background:#A8A8A8"></div>
<div class="a" style="left:0px;top:249px;width:68px;height:19px;overflow:hidden"><div class="t" style="left:3px;top:4.27px;font-size:11.5px;color:#000;transform:scaleX(0.95);transform-origin:left">Delete/Del</div></div>
<div class="a" style="left:68px;top:249px;width:329px;height:19px;overflow:hidden"><div class="t" style="left:3px;top:4.27px;font-size:11.5px;color:#000;transform:scaleX(0.95);transform-origin:left">Brisanje sadržaja aktivne ćelije</div></div>
<div class="a" style="left:397px;top:249px;width:106px;height:19px;overflow:hidden"><div class="t" style="left:3px;top:4.27px;font-size:11.5px;color:#000;transform:scaleX(0.95);transform-origin:left">Aktivna tabela</div></div>
<div class="a" style="left:0;top:267px;width:504px;height:1px;background:#A8A8A8"></div>
<div class="a" style="left:0px;top:268px;width:68px;height:19px;overflow:hidden"><div class="t" style="left:3px;top:4.27px;font-size:11.5px;color:#000;transform:scaleX(0.95);transform-origin:left">Ctrl + Del</div></div>
<div class="a" style="left:68px;top:268px;width:329px;height:19px;overflow:hidden"><div class="t" style="left:3px;top:4.27px;font-size:11.5px;color:#000;transform:scaleX(0.95);transform-origin:left">Brisanje reda (ukoliko je to programski dozvoljeno)</div></div>
<div class="a" style="left:397px;top:268px;width:106px;height:19px;overflow:hidden"><div class="t" style="left:3px;top:4.27px;font-size:11.5px;color:#000;transform:scaleX(0.95);transform-origin:left">Aktivna tabela</div></div>
<div class="a" style="left:0;top:286px;width:504px;height:1px;background:#A8A8A8"></div>
<div class="a" style="left:0;top:287px;width:504px;height:19px;background:#D8E4F2"></div>
<div class="a" style="left:0px;top:287px;width:68px;height:19px;overflow:hidden"><div class="t" style="left:3px;top:4.27px;font-size:11.5px;color:#000;transform:scaleX(0.95);transform-origin:left">Alt + F2</div></div>
<div class="a" style="left:68px;top:287px;width:329px;height:19px;overflow:hidden"><div class="t" style="left:3px;top:4.27px;font-size:11.5px;color:#000;transform:scaleX(0.95);transform-origin:left">Prikaz dokumenta po broju naloga (ukoliko je to programski predviđeno)</div></div>
<div class="a" style="left:397px;top:287px;width:106px;height:19px;overflow:hidden"><div class="t" style="left:3px;top:4.27px;font-size:11.5px;color:#000;transform:scaleX(0.95);transform-origin:left">Aktivna tabela</div></div>
<div class="a" style="left:0;top:305px;width:504px;height:1px;background:#A8A8A8"></div>
<div class="a" style="left:0px;top:306px;width:68px;height:19px;overflow:hidden"><div class="t" style="left:3px;top:4.27px;font-size:11.5px;color:#000;transform:scaleX(0.95);transform-origin:left">Ctrl + C</div></div>
<div class="a" style="left:68px;top:306px;width:329px;height:19px;overflow:hidden"><div class="t" style="left:3px;top:4.27px;font-size:11.5px;color:#000;transform:scaleX(0.95);transform-origin:left">Kopiraj tekst</div></div>
<div class="a" style="left:397px;top:306px;width:106px;height:19px;overflow:hidden"><div class="t" style="left:3px;top:4.27px;font-size:11.5px;color:#000;transform:scaleX(0.95);transform-origin:left">OS Globalno</div></div>
<div class="a" style="left:0;top:324px;width:504px;height:1px;background:#A8A8A8"></div>
<div class="a" style="left:0px;top:325px;width:68px;height:19px;overflow:hidden"><div class="t" style="left:3px;top:4.27px;font-size:11.5px;color:#000;transform:scaleX(0.95);transform-origin:left">Ctrl + V</div></div>
<div class="a" style="left:68px;top:325px;width:329px;height:19px;overflow:hidden"><div class="t" style="left:3px;top:4.27px;font-size:11.5px;color:#000;transform:scaleX(0.95);transform-origin:left">Nalepi tekst</div></div>
<div class="a" style="left:397px;top:325px;width:106px;height:19px;overflow:hidden"><div class="t" style="left:3px;top:4.27px;font-size:11.5px;color:#000;transform:scaleX(0.95);transform-origin:left">OS Globalno</div></div>
<div class="a" style="left:0;top:343px;width:504px;height:1px;background:#A8A8A8"></div>
<div class="a" style="left:0px;top:344px;width:68px;height:19px;overflow:hidden"><div class="t" style="left:3px;top:4.27px;font-size:11.5px;color:#000;transform:scaleX(0.95);transform-origin:left">Ctrl + X</div></div>
<div class="a" style="left:68px;top:344px;width:329px;height:19px;overflow:hidden"><div class="t" style="left:3px;top:4.27px;font-size:11.5px;color:#000;transform:scaleX(0.95);transform-origin:left">Iseci tekst</div></div>
<div class="a" style="left:397px;top:344px;width:106px;height:19px;overflow:hidden"><div class="t" style="left:3px;top:4.27px;font-size:11.5px;color:#000;transform:scaleX(0.95);transform-origin:left">OS Globalno</div></div>
<div class="a" style="left:0;top:362px;width:504px;height:1px;background:#A8A8A8"></div>
<div class="a" style="left:68px;top:0;width:1px;height:363px;background:#A8A8A8"></div>
<div class="a" style="left:397px;top:0;width:1px;height:363px;background:#A8A8A8"></div>
<div class="a" style="left:503px;top:0;width:20px;height:363px;background:#F3F3F3"></div>
<svg class="a" style="left:508px;top:7px" width="8" height="7"><path d="M0 6.5 L4 0 L8 6.5Z" fill="#A0A0A0"/></svg>
<div class="a" style="left:509px;top:96px;width:6.5px;height:145px;background:#A0A0A0;border-radius:3px"></div>
<svg class="a" style="left:508px;top:349px" width="8" height="7"><path d="M0 0 L4 6.5 L8 0Z" fill="#A0A0A0"/></svg>
</div>
<div class="a" style="left:239.5px;top:797px;width:1.4px;height:1.4px;background:#555;border-radius:1px"></div>
<div class="a" style="left:245.7px;top:797px;width:1.4px;height:1.4px;background:#555;border-radius:1px"></div>
<div class="a" style="left:249px;top:797px;width:1.4px;height:1.4px;background:#555;border-radius:1px"></div>
<div class="a" style="left:268px;top:797px;width:1.4px;height:1.4px;background:#555;border-radius:1px"></div>
<div class="a" style="left:273.5px;top:797px;width:1.4px;height:1.4px;background:#555;border-radius:1px"></div>
<div class="a" style="left:295px;top:797px;width:1.4px;height:1.4px;background:#555;border-radius:1px"></div>
<div class="a" style="left:372px;top:797px;width:1.4px;height:1.4px;background:#555;border-radius:1px"></div>
<div class="a" style="left:397px;top:797px;width:1.4px;height:1.4px;background:#555;border-radius:1px"></div>
<div class="a" style="left:401px;top:797px;width:1.4px;height:1.4px;background:#555;border-radius:1px"></div>
<div class="a" style="left:416px;top:797px;width:1.4px;height:1.4px;background:#555;border-radius:1px"></div>
<div class="a" style="left:420px;top:797px;width:1.4px;height:1.4px;background:#555;border-radius:1px"></div>
<div class="a" style="left:425px;top:797px;width:1.4px;height:1.4px;background:#555;border-radius:1px"></div>
<div class="a" style="left:427px;top:797px;width:1.4px;height:1.4px;background:#555;border-radius:1px"></div>
<div class="a" style="left:445px;top:797px;width:1.4px;height:1.4px;background:#555;border-radius:1px"></div>
<div class="a" style="left:516px;top:797px;width:1.4px;height:1.4px;background:#555;border-radius:1px"></div>
<div class="a" style="left:538px;top:797px;width:1.4px;height:1.4px;background:#555;border-radius:1px"></div>
<div class="a" style="left:545px;top:797px;width:1.4px;height:1.4px;background:#555;border-radius:1px"></div>
<div class="a" style="left:589px;top:797px;width:1.4px;height:1.4px;background:#555;border-radius:1px"></div>
<div class="a" style="left:614px;top:797px;width:1.4px;height:1.4px;background:#555;border-radius:1px"></div>
<div class="a" style="left:313px;top:796.5px;width:3px;height:2px;background:#444;transform:skewX(-40deg)"></div>
<div class="a" style="left:322px;top:796.5px;width:6px;height:2.2px;background:#444;border-radius:0 0 3px 3px"></div>
<div class="a" style="left:331px;top:796.5px;width:6px;height:2.2px;background:#444;border-radius:0 0 3px 3px"></div>
<div class="a" style="left:340px;top:796.5px;width:4px;height:2px;background:#444"></div>
<div class="a" style="left:489px;top:796.5px;width:5px;height:2px;background:#666;border-radius:0 0 3px 3px"></div>
<svg class="a" style="left:344px;top:795px;" width="20" height="10" viewBox="0 0 20 10"><path d="M0 0 L10 9.5 L20 0Z" fill="#FAFAFA" stroke="#D0D0D0" stroke-width="1"/><rect x="0" y="-1" width="20" height="1.5" fill="#FAFAFA"/></svg>
<div class="a" style="left:65px;top:705px;width:560px;height:46px;border:5px solid #E8202A"></div>
</body></html>
